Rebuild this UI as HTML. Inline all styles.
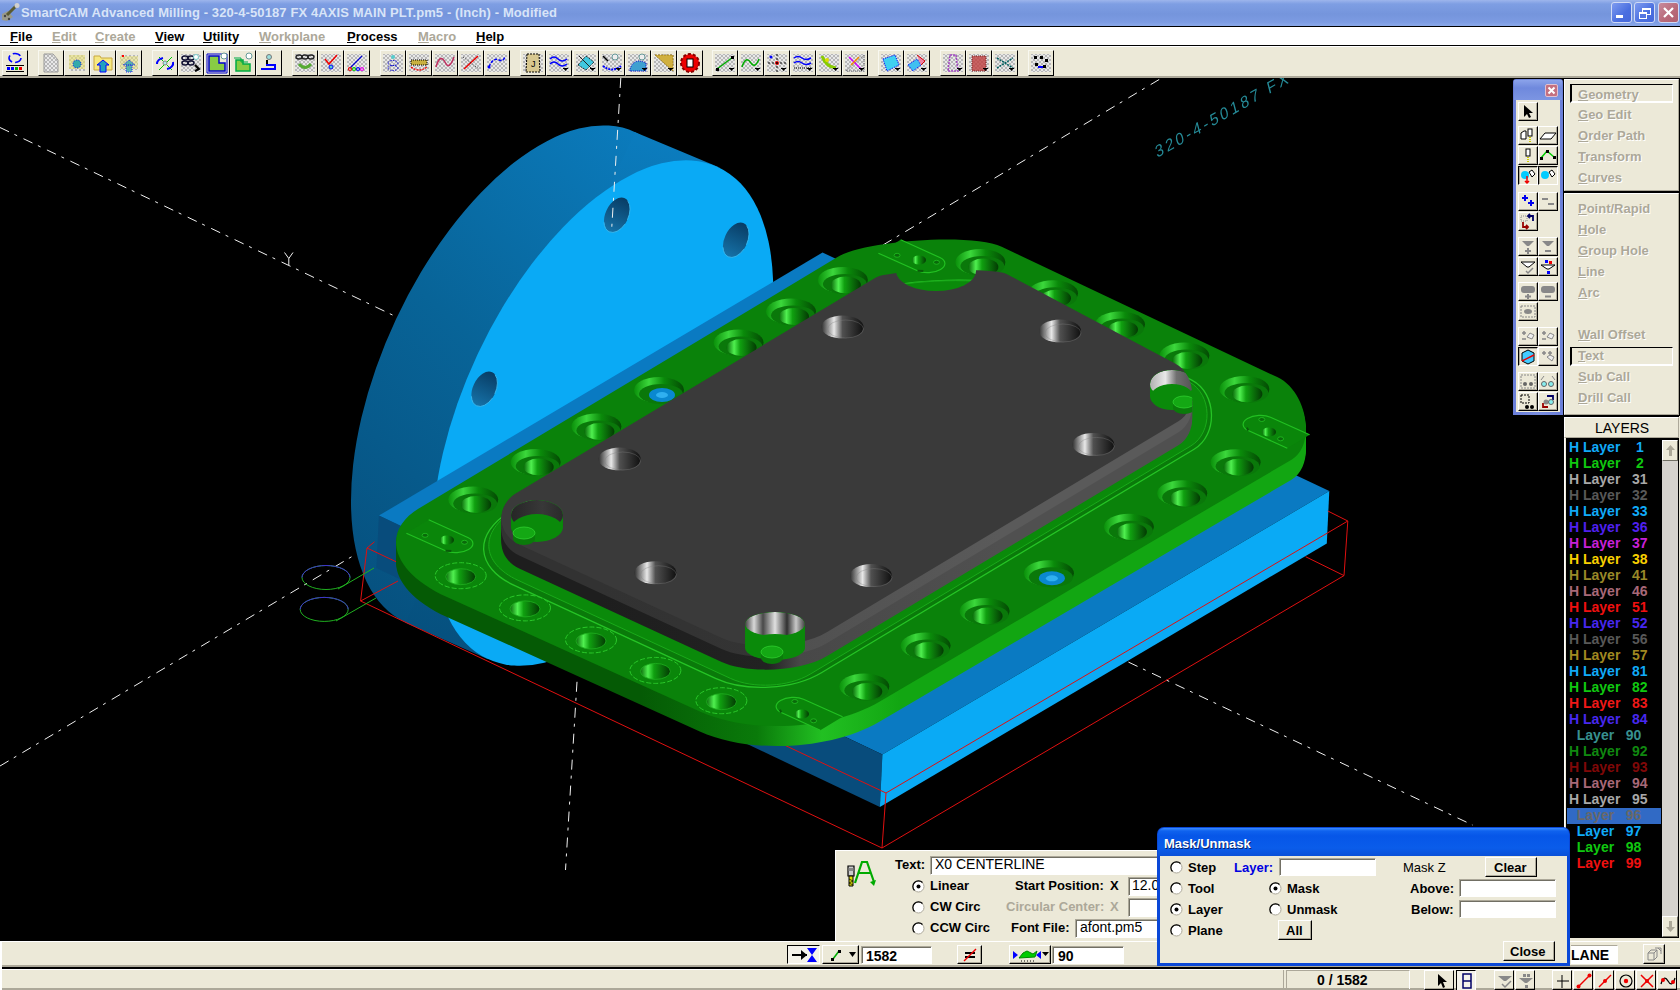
<!DOCTYPE html><html><head><meta charset="utf-8"><style>
*{margin:0;padding:0;box-sizing:border-box}
html,body{width:1680px;height:990px;overflow:hidden;background:#ECE9D8;font-family:"Liberation Sans", sans-serif;font-size:11px;color:#000}
.a{position:absolute}
.t{position:absolute;white-space:nowrap;line-height:1}
.btn{position:absolute;background:#ECE9D8;border-top:1px solid #fff;border-left:1px solid #fff;border-right:1px solid #000;border-bottom:1px solid #000;box-shadow:inset -1px -1px 0 #ACA899}
.sunk{position:absolute;background:#fff;border-top:1px solid #ACA899;border-left:1px solid #ACA899;border-right:1px solid #fff;border-bottom:1px solid #fff;box-shadow:inset 1px 1px 0 #716F64}
u{text-decoration:underline;text-decoration-thickness:1px;text-underline-offset:1px}
</style></head><body>

<div class="a" style="left:0;top:0;width:1680px;height:26px;background:linear-gradient(#9DB5EC 0px,#7E9EE3 4px,#7595DC 14px,#7C9BE2 22px,#87A6E8 25px)"></div>
<div class="a" style="left:0;top:26px;width:1680px;height:1px;background:#000"></div>
<svg class="a" style="left:1px;top:3px" width="19" height="18" viewBox="0 0 19 18">
<polygon points="1,11 7,8 12,14 6,18 1,17" fill="#9a9a8a"/>
<line x1="6" y1="12" x2="15" y2="3" stroke="#5a5a30" stroke-width="3"/>
<circle cx="16" cy="2.5" r="2.5" fill="#d0d0d0"/><circle cx="4" cy="13" r="1.2" fill="#444"/><circle cx="8" cy="16" r="1.2" fill="#444"/></svg>
<div class="t" style="left:21px;top:6px;font-size:13px;font-weight:bold;color:#D8E4F8;letter-spacing:0.1px">SmartCAM Advanced Milling - 320-4-50187 FX 4AXIS MAIN PLT.pm5 - (Inch) - Modified</div>
<div class="a" style="left:1611px;top:2px;width:21px;height:21px;border:1px solid #D0DAF5;border-radius:3px;background:linear-gradient(135deg,#7E9BF0,#4A6FE0 60%,#4668DA)"><div class="a" style="left:4px;top:12px;width:7px;height:3px;background:#fff"></div></div>
<div class="a" style="left:1634px;top:2px;width:21px;height:21px;border:1px solid #D0DAF5;border-radius:3px;background:linear-gradient(135deg,#7E9BF0,#4A6FE0 60%,#4668DA)"><div class="a" style="left:7px;top:5px;width:9px;height:7px;border:1px solid #fff;border-top-width:2px"></div><div class="a" style="left:4px;top:9px;width:8px;height:7px;border:1px solid #fff;border-top-width:2px;background:#5577E2"></div></div>
<div class="a" style="left:1658px;top:2px;width:21px;height:21px;border:1px solid #D0DAF5;border-radius:3px;background:linear-gradient(135deg,#C88B9C,#B86878 60%,#B06070)"><svg class="a" style="left:3px;top:3px" width="13" height="13"><path d="M2,2 L11,11 M11,2 L2,11" stroke="#fff" stroke-width="2.2"/></svg></div>
<div class="a" style="left:0;top:27px;width:1680px;height:18px;background:#fff"></div>
<div class="a" style="left:0;top:45px;width:1680px;height:1px;background:#000"></div>
<div class="t" style="left:10px;top:30px;font-size:13px;font-weight:bold;color:#000"><u>F</u>ile</div>
<div class="t" style="left:52px;top:30px;font-size:13px;font-weight:bold;color:#ACA899"><u>E</u>dit</div>
<div class="t" style="left:95px;top:30px;font-size:13px;font-weight:bold;color:#ACA899"><u>C</u>reate</div>
<div class="t" style="left:155px;top:30px;font-size:13px;font-weight:bold;color:#000"><u>V</u>iew</div>
<div class="t" style="left:203px;top:30px;font-size:13px;font-weight:bold;color:#000"><u>U</u>tility</div>
<div class="t" style="left:259px;top:30px;font-size:13px;font-weight:bold;color:#ACA899"><u>W</u>orkplane</div>
<div class="t" style="left:347px;top:30px;font-size:13px;font-weight:bold;color:#000"><u>P</u>rocess</div>
<div class="t" style="left:418px;top:30px;font-size:13px;font-weight:bold;color:#ACA899"><u>M</u>acro</div>
<div class="t" style="left:476px;top:30px;font-size:13px;font-weight:bold;color:#000"><u>H</u>elp</div>
<div class="a" style="left:0;top:46px;width:1680px;height:32px;background:#ECE9D8"></div>
<div class="a" style="left:0;top:46px;width:1680px;height:1px;background:#fff"></div>
<div class="a" style="left:0;top:76px;width:1680px;height:2px;background:#ACA899"></div>
<svg width="0" height="0" class="a"><defs><pattern id="ck" width="4" height="4" patternUnits="userSpaceOnUse"><rect width="4" height="4" fill="#E8E8E8"/><rect width="2" height="2" fill="#B8B8B8"/><rect x="2" y="2" width="2" height="2" fill="#B8B8B8"/></pattern></defs></svg>
<div class="a" style="left:2px;top:50px;width:26px;height:26px;background:#ECE9D8;border-right:1px solid #000;border-bottom:1px solid #000;border-top:1px solid #F8F8F0;border-left:1px solid #F8F8F0"></div>
<svg class="a" style="left:3px;top:51px" width="24" height="24" viewBox="0 0 24 24"><ellipse cx="12" cy="7" rx="6" ry="4.5" fill="none" stroke="#00f" stroke-width="1.6" stroke-dasharray="8 3"/><rect x="3" y="14" width="18" height="1" fill="#000"/><rect x="3" y="20" width="18" height="1" fill="#000"/><rect x="4" y="16" width="3" height="3" fill="#00f"/><rect x="8" y="16" width="3" height="3" fill="#00f"/><rect x="12" y="16" width="3" height="3" fill="#0a0"/><rect x="16" y="16" width="3" height="3" fill="#e00"/></svg>
<div class="a" style="left:38px;top:50px;width:26px;height:26px;background:#ECE9D8;border-right:1px solid #000;border-bottom:1px solid #000;border-top:1px solid #F8F8F0;border-left:1px solid #F8F8F0"></div>
<svg class="a" style="left:39px;top:51px" width="24" height="24" viewBox="0 0 24 24"><path d="M5,3 L14,3 L19,9 L19,21 L5,21 Z" fill="url(#ck)" stroke="#999"/></svg>
<div class="a" style="left:64px;top:50px;width:26px;height:26px;background:#ECE9D8;border-right:1px solid #000;border-bottom:1px solid #000;border-top:1px solid #F8F8F0;border-left:1px solid #F8F8F0"></div>
<svg class="a" style="left:65px;top:51px" width="24" height="24" viewBox="0 0 24 24"><path d="M4,4 L20,4 L20,20 L4,20 Z" fill="url(#ck)"/><path d="M4,4 L20,4 L20,18 L4,18Z" fill="#e8e070" opacity="0.6"/><circle cx="12" cy="13" r="4" fill="#3aa" stroke="#00f" stroke-dasharray="1 1.5"/></svg>
<div class="a" style="left:90px;top:50px;width:26px;height:26px;background:#ECE9D8;border-right:1px solid #000;border-bottom:1px solid #000;border-top:1px solid #F8F8F0;border-left:1px solid #F8F8F0"></div>
<svg class="a" style="left:91px;top:51px" width="24" height="24" viewBox="0 0 24 24"><path d="M3,5 L9,5 L10,7 L21,7 L21,19 L3,19 Z" fill="#F6E880" stroke="#c8a840"/><path d="M12,9 L18,14 L15,14 L15,21 L9,21 L9,14 L6,14 Z" fill="#20A0C0" stroke="#00f"/></svg>
<div class="a" style="left:116px;top:50px;width:26px;height:26px;background:#ECE9D8;border-right:1px solid #000;border-bottom:1px solid #000;border-top:1px solid #F8F8F0;border-left:1px solid #F8F8F0"></div>
<svg class="a" style="left:117px;top:51px" width="24" height="24" viewBox="0 0 24 24"><path d="M3,4 L21,4 L21,19 L3,19 Z" fill="url(#ck)"/><path d="M3,5 L21,5 L21,18 L3,18Z" fill="#e8e070" opacity="0.5"/><path d="M12,9 L18,14 L6,14 Z M9,14 L15,14 L15,21 L9,21Z" fill="#3aa" opacity="0.8" stroke="#00f" stroke-dasharray="1 1"/><rect x="5" y="4" width="2" height="2" fill="#f00"/></svg>
<div class="a" style="left:152px;top:50px;width:26px;height:26px;background:#ECE9D8;border-right:1px solid #000;border-bottom:1px solid #000;border-top:1px solid #F8F8F0;border-left:1px solid #F8F8F0"></div>
<svg class="a" style="left:153px;top:51px" width="24" height="24" viewBox="0 0 24 24"><path d="M6,6 L19,19 M19,6 L6,19" stroke="#0c0" stroke-width="1"/><path d="M4,13 A8,6 0 0 1 10,7" fill="none" stroke="#00f" stroke-width="2"/><path d="M20,11 A8,6 0 0 1 14,18" fill="none" stroke="#00f" stroke-width="2"/><circle cx="12" cy="12" r="2" fill="#aee" stroke="#888"/></svg>
<div class="a" style="left:178px;top:50px;width:26px;height:26px;background:#ECE9D8;border-right:1px solid #000;border-bottom:1px solid #000;border-top:1px solid #F8F8F0;border-left:1px solid #F8F8F0"></div>
<svg class="a" style="left:179px;top:51px" width="24" height="24" viewBox="0 0 24 24"><rect x="2" y="3" width="20" height="18" fill="url(#ck)"/><g fill="none" stroke="#113" stroke-width="1.5"><ellipse cx="6" cy="7" rx="3" ry="2"/><ellipse cx="12" cy="7" rx="3" ry="2"/><ellipse cx="6" cy="12" rx="3" ry="2"/><ellipse cx="12" cy="12" rx="3" ry="2"/></g><circle cx="17" cy="6" r="2.5" fill="#fff" stroke="#7cc"/><path d="M16,14 L20,18 L16,20" fill="none" stroke="#000" stroke-width="2"/></svg>
<div class="a" style="left:204px;top:50px;width:26px;height:26px;background:#ECE9D8;border-right:1px solid #000;border-bottom:1px solid #000;border-top:1px solid #F8F8F0;border-left:1px solid #F8F8F0"></div>
<svg class="a" style="left:205px;top:51px" width="24" height="24" viewBox="0 0 24 24"><path d="M4,5 L14,5 L14,12 L20,12 L20,20 L4,20 Z" fill="#8c4" stroke="#00c" stroke-width="1.5"/><path d="M2,3 L22,3 L22,22 L2,22Z" fill="none" stroke="#00c"/><circle cx="19" cy="5" r="3" fill="#fff" stroke="#699"/></svg>
<div class="a" style="left:230px;top:50px;width:26px;height:26px;background:#ECE9D8;border-right:1px solid #000;border-bottom:1px solid #000;border-top:1px solid #F8F8F0;border-left:1px solid #F8F8F0"></div>
<svg class="a" style="left:231px;top:51px" width="24" height="24" viewBox="0 0 24 24"><path d="M5,9 L12,9 L12,13 L19,13 L19,20 L5,20 Z" fill="#8c4" stroke="#0a4" stroke-width="1.5"/><path d="M3,7 L10,7 L10,11 L17,11" fill="none" stroke="#0a4"/><circle cx="18" cy="5" r="3" fill="#fff" stroke="#699"/></svg>
<div class="a" style="left:256px;top:50px;width:26px;height:26px;background:#ECE9D8;border-right:1px solid #000;border-bottom:1px solid #000;border-top:1px solid #F8F8F0;border-left:1px solid #F8F8F0"></div>
<svg class="a" style="left:257px;top:51px" width="24" height="24" viewBox="0 0 24 24"><circle cx="12" cy="6" r="2.5" fill="#9dd" stroke="#777"/><path d="M10,11 L10,14 L18,14 L18,18 L4,18" fill="none" stroke="#00f" stroke-width="2"/><rect x="9" y="9" width="2" height="4" fill="#000"/></svg>
<div class="a" style="left:292px;top:50px;width:26px;height:26px;background:#ECE9D8;border-right:1px solid #000;border-bottom:1px solid #000;border-top:1px solid #F8F8F0;border-left:1px solid #F8F8F0"></div>
<svg class="a" style="left:293px;top:51px" width="24" height="24" viewBox="0 0 24 24"><rect x="2" y="3" width="20" height="18" fill="url(#ck)"/><g fill="none" stroke="#222" stroke-width="1.3"><ellipse cx="6" cy="6" rx="3" ry="2"/><ellipse cx="12" cy="6" rx="3" ry="2"/><ellipse cx="18" cy="6" rx="3" ry="2"/></g><path d="M6,13 Q12,20 18,13" stroke="#5a3" stroke-width="3" fill="none"/></svg>
<div class="a" style="left:318px;top:50px;width:26px;height:26px;background:#ECE9D8;border-right:1px solid #000;border-bottom:1px solid #000;border-top:1px solid #F8F8F0;border-left:1px solid #F8F8F0"></div>
<svg class="a" style="left:319px;top:51px" width="24" height="24" viewBox="0 0 24 24"><rect x="2" y="3" width="20" height="18" fill="url(#ck)"/><path d="M6,8 L10,13 L18,4" fill="none" stroke="#e00" stroke-width="1.5"/><circle cx="12" cy="16" r="2" fill="#5cc" stroke="#00f"/></svg>
<div class="a" style="left:344px;top:50px;width:26px;height:26px;background:#ECE9D8;border-right:1px solid #000;border-bottom:1px solid #000;border-top:1px solid #F8F8F0;border-left:1px solid #F8F8F0"></div>
<svg class="a" style="left:345px;top:51px" width="24" height="24" viewBox="0 0 24 24"><rect x="2" y="3" width="20" height="18" fill="url(#ck)"/><path d="M5,17 L17,5" stroke="#00c" stroke-width="1.3"/><g fill="none" stroke-width="1.2"><circle cx="5" cy="18" r="1.5" stroke="#e00"/><circle cx="9" cy="18" r="1.5" stroke="#0c0"/><circle cx="13" cy="18" r="1.5" stroke="#00f"/><circle cx="17" cy="18" r="1.5" stroke="#e0e"/></g></svg>
<div class="a" style="left:380px;top:50px;width:26px;height:26px;background:#ECE9D8;border-right:1px solid #000;border-bottom:1px solid #000;border-top:1px solid #F8F8F0;border-left:1px solid #F8F8F0"></div>
<svg class="a" style="left:381px;top:51px" width="24" height="24" viewBox="0 0 24 24"><rect x="2" y="3" width="20" height="18" fill="url(#ck)"/><circle cx="12" cy="6" r="2" fill="#5cc"/><g fill="none" stroke="#00c" stroke-dasharray="1.5 1"><ellipse cx="12" cy="12" rx="5" ry="2.5"/><ellipse cx="12" cy="17" rx="5" ry="2.5"/></g></svg>
<div class="a" style="left:406px;top:50px;width:26px;height:26px;background:#ECE9D8;border-right:1px solid #000;border-bottom:1px solid #000;border-top:1px solid #F8F8F0;border-left:1px solid #F8F8F0"></div>
<svg class="a" style="left:407px;top:51px" width="24" height="24" viewBox="0 0 24 24"><rect x="2" y="3" width="20" height="18" fill="url(#ck)"/><rect x="4" y="9" width="16" height="5" fill="#c8b040" stroke="#000" stroke-dasharray="1 1"/><path d="M4,16 Q12,22 20,16" stroke="#e00" stroke-width="1.3" fill="none" stroke-dasharray="2 1"/></svg>
<div class="a" style="left:432px;top:50px;width:26px;height:26px;background:#ECE9D8;border-right:1px solid #000;border-bottom:1px solid #000;border-top:1px solid #F8F8F0;border-left:1px solid #F8F8F0"></div>
<svg class="a" style="left:433px;top:51px" width="24" height="24" viewBox="0 0 24 24"><rect x="2" y="3" width="20" height="18" fill="url(#ck)"/><path d="M3,16 Q7,2 12,11 Q16,20 21,6" stroke="#c03060" stroke-width="1.5" fill="none"/></svg>
<div class="a" style="left:458px;top:50px;width:26px;height:26px;background:#ECE9D8;border-right:1px solid #000;border-bottom:1px solid #000;border-top:1px solid #F8F8F0;border-left:1px solid #F8F8F0"></div>
<svg class="a" style="left:459px;top:51px" width="24" height="24" viewBox="0 0 24 24"><rect x="2" y="3" width="20" height="18" fill="url(#ck)"/><path d="M5,18 L19,5" stroke="#e00" stroke-width="1.5"/><path d="M4,6 L20,18" stroke="#222" stroke-dasharray="1 2"/></svg>
<div class="a" style="left:484px;top:50px;width:26px;height:26px;background:#ECE9D8;border-right:1px solid #000;border-bottom:1px solid #000;border-top:1px solid #F8F8F0;border-left:1px solid #F8F8F0"></div>
<svg class="a" style="left:485px;top:51px" width="24" height="24" viewBox="0 0 24 24"><rect x="2" y="3" width="20" height="18" fill="url(#ck)"/><path d="M4,16 Q8,6 14,9 Q18,11 20,6" stroke="#00f" stroke-width="1.5" fill="none" stroke-dasharray="3 1.5"/><circle cx="4" cy="16" r="1.5" fill="#00f"/></svg>
<div class="a" style="left:520px;top:50px;width:26px;height:26px;background:#ECE9D8;border-right:1px solid #000;border-bottom:1px solid #000;border-top:1px solid #F8F8F0;border-left:1px solid #F8F8F0"></div>
<svg class="a" style="left:521px;top:51px" width="24" height="24" viewBox="0 0 24 24"><rect x="2" y="3" width="20" height="18" fill="url(#ck)"/><path d="M6,3 L18,3 L19,21 L5,21 Z" fill="#d8c890" stroke="#000" stroke-dasharray="2 1"/><text x="10" y="16" font-size="9" fill="#000">J</text></svg>
<div class="a" style="left:546px;top:50px;width:26px;height:26px;background:#ECE9D8;border-right:1px solid #000;border-bottom:1px solid #000;border-top:1px solid #F8F8F0;border-left:1px solid #F8F8F0"></div>
<svg class="a" style="left:547px;top:51px" width="24" height="24" viewBox="0 0 24 24"><rect x="2" y="3" width="20" height="18" fill="url(#ck)"/><path d="M3,8 Q7,4 11,8 Q15,12 20,8 M3,13 Q7,9 11,13 Q15,17 20,13" stroke="#00f" stroke-width="1.5" fill="none"/></svg>
<svg class="a" style="left:563px;top:68px" width="6" height="5"><path d="M0,0 L5,0 L2.5,3Z" fill="#000"/><rect x="0" y="0" width="5" height="1" fill="#000"/></svg>
<div class="a" style="left:573px;top:50px;width:26px;height:26px;background:#ECE9D8;border-right:1px solid #000;border-bottom:1px solid #000;border-top:1px solid #F8F8F0;border-left:1px solid #F8F8F0"></div>
<svg class="a" style="left:574px;top:51px" width="24" height="24" viewBox="0 0 24 24"><rect x="2" y="3" width="20" height="18" fill="url(#ck)"/><path d="M4,14 L12,5 L20,11 L12,19 Z" fill="#40c8e0" stroke="#000" stroke-dasharray="1 1"/><path d="M5,5 L19,19" stroke="#222"/></svg>
<svg class="a" style="left:590px;top:68px" width="6" height="5"><path d="M0,0 L5,0 L2.5,3Z" fill="#000"/><rect x="0" y="0" width="5" height="1" fill="#000"/></svg>
<div class="a" style="left:599px;top:50px;width:26px;height:26px;background:#ECE9D8;border-right:1px solid #000;border-bottom:1px solid #000;border-top:1px solid #F8F8F0;border-left:1px solid #F8F8F0"></div>
<svg class="a" style="left:600px;top:51px" width="24" height="24" viewBox="0 0 24 24"><rect x="2" y="3" width="20" height="18" fill="url(#ck)"/><path d="M3,15 Q12,22 21,15" stroke="#00f" stroke-width="2" fill="none" stroke-dasharray="2 1"/><circle cx="15" cy="6" r="3" fill="#eee" stroke="#699"/><path d="M3,5 L8,10" stroke="#000" stroke-width="1.5"/></svg>
<svg class="a" style="left:616px;top:68px" width="6" height="5"><path d="M0,0 L5,0 L2.5,3Z" fill="#000"/><rect x="0" y="0" width="5" height="1" fill="#000"/></svg>
<div class="a" style="left:625px;top:50px;width:26px;height:26px;background:#ECE9D8;border-right:1px solid #000;border-bottom:1px solid #000;border-top:1px solid #F8F8F0;border-left:1px solid #F8F8F0"></div>
<svg class="a" style="left:626px;top:51px" width="24" height="24" viewBox="0 0 24 24"><rect x="2" y="3" width="20" height="18" fill="url(#ck)"/><path d="M4,18 Q8,6 20,12 L20,20 L4,20Z" fill="#40a0d0" stroke="#00c" stroke-dasharray="1 1"/><circle cx="16" cy="6" r="3" fill="#eee" stroke="#699"/></svg>
<svg class="a" style="left:642px;top:68px" width="6" height="5"><path d="M0,0 L5,0 L2.5,3Z" fill="#000"/><rect x="0" y="0" width="5" height="1" fill="#000"/></svg>
<div class="a" style="left:651px;top:50px;width:26px;height:26px;background:#ECE9D8;border-right:1px solid #000;border-bottom:1px solid #000;border-top:1px solid #F8F8F0;border-left:1px solid #F8F8F0"></div>
<svg class="a" style="left:652px;top:51px" width="24" height="24" viewBox="0 0 24 24"><rect x="2" y="3" width="20" height="18" fill="url(#ck)"/><path d="M3,4 L21,4 L21,20 Z" fill="#d0b040" stroke="#a08020" stroke-dasharray="2 1"/></svg>
<svg class="a" style="left:668px;top:68px" width="6" height="5"><path d="M0,0 L5,0 L2.5,3Z" fill="#000"/><rect x="0" y="0" width="5" height="1" fill="#000"/></svg>
<div class="a" style="left:677px;top:50px;width:26px;height:26px;background:#ECE9D8;border-right:1px solid #000;border-bottom:1px solid #000;border-top:1px solid #F8F8F0;border-left:1px solid #F8F8F0"></div>
<svg class="a" style="left:678px;top:51px" width="24" height="24" viewBox="0 0 24 24"><circle cx="12" cy="12" r="9" fill="#e00" stroke="#800" stroke-dasharray="3 2" stroke-width="2"/><circle cx="12" cy="12" r="6" fill="#e00"/><rect x="9" y="8" width="6" height="8" fill="#fff" stroke="#000"/></svg>
<div class="a" style="left:712px;top:50px;width:26px;height:26px;background:#ECE9D8;border-right:1px solid #000;border-bottom:1px solid #000;border-top:1px solid #F8F8F0;border-left:1px solid #F8F8F0"></div>
<svg class="a" style="left:713px;top:51px" width="24" height="24" viewBox="0 0 24 24"><rect x="2" y="3" width="20" height="18" fill="url(#ck)"/><path d="M4,18 L20,6" stroke="#0a0" stroke-width="1.5"/><rect x="3" y="17" width="3" height="3" fill="#000"/><rect x="18" y="5" width="3" height="3" fill="#000"/></svg>
<svg class="a" style="left:729px;top:68px" width="6" height="5"><path d="M0,0 L5,0 L2.5,3Z" fill="#000"/><rect x="0" y="0" width="5" height="1" fill="#000"/></svg>
<div class="a" style="left:738px;top:50px;width:26px;height:26px;background:#ECE9D8;border-right:1px solid #000;border-bottom:1px solid #000;border-top:1px solid #F8F8F0;border-left:1px solid #F8F8F0"></div>
<svg class="a" style="left:739px;top:51px" width="24" height="24" viewBox="0 0 24 24"><rect x="2" y="3" width="20" height="18" fill="url(#ck)"/><path d="M3,16 Q7,4 12,12 Q16,18 20,8" stroke="#0a0" stroke-width="1.5" fill="none"/></svg>
<svg class="a" style="left:755px;top:68px" width="6" height="5"><path d="M0,0 L5,0 L2.5,3Z" fill="#000"/><rect x="0" y="0" width="5" height="1" fill="#000"/></svg>
<div class="a" style="left:764px;top:50px;width:26px;height:26px;background:#ECE9D8;border-right:1px solid #000;border-bottom:1px solid #000;border-top:1px solid #F8F8F0;border-left:1px solid #F8F8F0"></div>
<svg class="a" style="left:765px;top:51px" width="24" height="24" viewBox="0 0 24 24"><rect x="2" y="3" width="20" height="18" fill="url(#ck)"/><circle cx="12" cy="12" r="2" fill="#e00"/><path d="M12,3 L12,21 M3,12 L21,12" stroke="#000" stroke-dasharray="2 2"/><circle cx="6" cy="6" r="1.5" fill="#00f"/></svg>
<svg class="a" style="left:781px;top:68px" width="6" height="5"><path d="M0,0 L5,0 L2.5,3Z" fill="#000"/><rect x="0" y="0" width="5" height="1" fill="#000"/></svg>
<div class="a" style="left:790px;top:50px;width:26px;height:26px;background:#ECE9D8;border-right:1px solid #000;border-bottom:1px solid #000;border-top:1px solid #F8F8F0;border-left:1px solid #F8F8F0"></div>
<svg class="a" style="left:791px;top:51px" width="24" height="24" viewBox="0 0 24 24"><rect x="2" y="3" width="20" height="18" fill="url(#ck)"/><path d="M3,7 Q7,4 11,7 Q15,10 20,7 M3,12 Q7,9 11,12 Q15,15 20,12" stroke="#00f" stroke-width="1.5" fill="none"/><path d="M3,17 L20,17" stroke="#000" stroke-dasharray="1 1"/></svg>
<svg class="a" style="left:807px;top:68px" width="6" height="5"><path d="M0,0 L5,0 L2.5,3Z" fill="#000"/><rect x="0" y="0" width="5" height="1" fill="#000"/></svg>
<div class="a" style="left:816px;top:50px;width:26px;height:26px;background:#ECE9D8;border-right:1px solid #000;border-bottom:1px solid #000;border-top:1px solid #F8F8F0;border-left:1px solid #F8F8F0"></div>
<svg class="a" style="left:817px;top:51px" width="24" height="24" viewBox="0 0 24 24"><rect x="2" y="3" width="20" height="18" fill="url(#ck)"/><path d="M5,5 Q9,16 19,17" stroke="#8c0" stroke-width="3" fill="none"/><circle cx="10" cy="9" r="2" fill="#dd0"/></svg>
<svg class="a" style="left:833px;top:68px" width="6" height="5"><path d="M0,0 L5,0 L2.5,3Z" fill="#000"/><rect x="0" y="0" width="5" height="1" fill="#000"/></svg>
<div class="a" style="left:842px;top:50px;width:26px;height:26px;background:#ECE9D8;border-right:1px solid #000;border-bottom:1px solid #000;border-top:1px solid #F8F8F0;border-left:1px solid #F8F8F0"></div>
<svg class="a" style="left:843px;top:51px" width="24" height="24" viewBox="0 0 24 24"><rect x="2" y="3" width="20" height="18" fill="url(#ck)"/><path d="M3,20 L21,4 L21,20Z" fill="none" stroke="#666" stroke-dasharray="1 1"/><path d="M6,6 L18,18" stroke="#c0f" stroke-width="1.5"/><path d="M16,6 L8,14" stroke="#e80" stroke-width="1.5"/></svg>
<svg class="a" style="left:859px;top:68px" width="6" height="5"><path d="M0,0 L5,0 L2.5,3Z" fill="#000"/><rect x="0" y="0" width="5" height="1" fill="#000"/></svg>
<div class="a" style="left:878px;top:50px;width:26px;height:26px;background:#ECE9D8;border-right:1px solid #000;border-bottom:1px solid #000;border-top:1px solid #F8F8F0;border-left:1px solid #F8F8F0"></div>
<svg class="a" style="left:879px;top:51px" width="24" height="24" viewBox="0 0 24 24"><rect x="2" y="3" width="20" height="18" fill="url(#ck)"/><path d="M4,8 L16,4 L20,14 L8,20 Z" fill="#40d0f0" stroke="#00f" stroke-dasharray="1 1"/></svg>
<svg class="a" style="left:895px;top:68px" width="6" height="5"><path d="M0,0 L5,0 L2.5,3Z" fill="#000"/><rect x="0" y="0" width="5" height="1" fill="#000"/></svg>
<div class="a" style="left:904px;top:50px;width:26px;height:26px;background:#ECE9D8;border-right:1px solid #000;border-bottom:1px solid #000;border-top:1px solid #F8F8F0;border-left:1px solid #F8F8F0"></div>
<svg class="a" style="left:905px;top:51px" width="24" height="24" viewBox="0 0 24 24"><rect x="2" y="3" width="20" height="18" fill="url(#ck)"/><path d="M3,14 L12,8 L16,14 L8,20Z" fill="#40c0f0" stroke="#00f" stroke-dasharray="1 1"/><path d="M12,4 L20,10 L16,14" fill="#f080a0" stroke="#c00"/></svg>
<svg class="a" style="left:921px;top:68px" width="6" height="5"><path d="M0,0 L5,0 L2.5,3Z" fill="#000"/><rect x="0" y="0" width="5" height="1" fill="#000"/></svg>
<div class="a" style="left:940px;top:50px;width:26px;height:26px;background:#ECE9D8;border-right:1px solid #000;border-bottom:1px solid #000;border-top:1px solid #F8F8F0;border-left:1px solid #F8F8F0"></div>
<svg class="a" style="left:941px;top:51px" width="24" height="24" viewBox="0 0 24 24"><rect x="2" y="3" width="20" height="18" fill="url(#ck)"/><path d="M9,4 L15,4 L17,20 L7,20 Z" fill="none" stroke="#a040c0" stroke-width="1.5" stroke-dasharray="2 1"/></svg>
<svg class="a" style="left:957px;top:68px" width="6" height="5"><path d="M0,0 L5,0 L2.5,3Z" fill="#000"/><rect x="0" y="0" width="5" height="1" fill="#000"/></svg>
<div class="a" style="left:966px;top:50px;width:26px;height:26px;background:#ECE9D8;border-right:1px solid #000;border-bottom:1px solid #000;border-top:1px solid #F8F8F0;border-left:1px solid #F8F8F0"></div>
<svg class="a" style="left:967px;top:51px" width="24" height="24" viewBox="0 0 24 24"><rect x="2" y="3" width="20" height="18" fill="url(#ck)"/><path d="M5,5 L19,5 L19,20 L5,20 Z" fill="#c04040" opacity="0.8" stroke="#600" stroke-dasharray="1 1"/></svg>
<svg class="a" style="left:983px;top:68px" width="6" height="5"><path d="M0,0 L5,0 L2.5,3Z" fill="#000"/><rect x="0" y="0" width="5" height="1" fill="#000"/></svg>
<div class="a" style="left:992px;top:50px;width:26px;height:26px;background:#ECE9D8;border-right:1px solid #000;border-bottom:1px solid #000;border-top:1px solid #F8F8F0;border-left:1px solid #F8F8F0"></div>
<svg class="a" style="left:993px;top:51px" width="24" height="24" viewBox="0 0 24 24"><rect x="2" y="3" width="20" height="18" fill="url(#ck)"/><path d="M4,7 L20,17 M4,17 L20,7" stroke="#006060" stroke-width="1.5" stroke-dasharray="2 1"/></svg>
<svg class="a" style="left:1009px;top:68px" width="6" height="5"><path d="M0,0 L5,0 L2.5,3Z" fill="#000"/><rect x="0" y="0" width="5" height="1" fill="#000"/></svg>
<div class="a" style="left:1028px;top:50px;width:26px;height:26px;background:#ECE9D8;border-right:1px solid #000;border-bottom:1px solid #000;border-top:1px solid #F8F8F0;border-left:1px solid #F8F8F0"></div>
<svg class="a" style="left:1029px;top:51px" width="24" height="24" viewBox="0 0 24 24"><rect x="2" y="3" width="20" height="18" fill="url(#ck)"/><rect x="3" y="4" width="18" height="16" fill="url(#ck)"/><g fill="#000"><rect x="5" y="5" width="3" height="3"/><rect x="11" y="5" width="3" height="3"/><rect x="16" y="8" width="3" height="3"/><rect x="6" y="12" width="3" height="3"/><rect x="14" y="14" width="3" height="3"/></g><rect x="9" y="15" width="5" height="2" fill="#00f"/></svg>
<div class="a" style="left:0;top:78px;width:1563px;height:863px;background:#000"></div>
<svg class="a" style="left:0;top:78px" width="1563" height="863" viewBox="0 78 1563 863">
<defs>
<linearGradient id="discside" gradientUnits="userSpaceOnUse" x1="600" y1="120" x2="420" y2="640"><stop offset="0" stop-color="#0B7CBE"/><stop offset="0.5" stop-color="#086498"/><stop offset="1" stop-color="#06507E"/></linearGradient>
<linearGradient id="plateside" gradientUnits="userSpaceOnUse" x1="640" y1="0" x2="900" y2="0"><stop offset="0" stop-color="#055A05"/><stop offset="0.45" stop-color="#0A7A0A"/><stop offset="0.7" stop-color="#22C022"/><stop offset="1" stop-color="#12A612"/></linearGradient>
<linearGradient id="grayside" gradientUnits="userSpaceOnUse" x1="600" y1="0" x2="1000" y2="0"><stop offset="0" stop-color="#323232"/><stop offset="0.42" stop-color="#343434"/><stop offset="0.5" stop-color="#505050"/><stop offset="1" stop-color="#5A5A5A"/></linearGradient><linearGradient id="grayside2" gradientUnits="userSpaceOnUse" x1="600" y1="0" x2="1000" y2="0"><stop offset="0" stop-color="#1E1E1E"/><stop offset="0.42" stop-color="#222222"/><stop offset="0.5" stop-color="#484848"/><stop offset="1" stop-color="#505050"/></linearGradient>
<linearGradient id="holeG" x1="0" y1="0" x2="1" y2="0"><stop offset="0" stop-color="#0A6A0A"/><stop offset="0.25" stop-color="#50F050"/><stop offset="0.45" stop-color="#10A010"/><stop offset="1" stop-color="#033A03"/></linearGradient>
<linearGradient id="cbG" x1="0" y1="0" x2="1" y2="0"><stop offset="0" stop-color="#0A900A"/><stop offset="0.3" stop-color="#3CD83C"/><stop offset="0.6" stop-color="#0A8A0A"/><stop offset="1" stop-color="#044A04"/></linearGradient>
<linearGradient id="grayHole" x1="0" y1="0" x2="1" y2="0"><stop offset="0" stop-color="#303030"/><stop offset="0.3" stop-color="#E8E8E8"/><stop offset="0.5" stop-color="#505050"/><stop offset="1" stop-color="#101010"/></linearGradient>
<linearGradient id="blueHole" x1="0" y1="0" x2="1" y2="0"><stop offset="0" stop-color="#0A5A90"/><stop offset="0.6" stop-color="#0A80C0"/><stop offset="1" stop-color="#0A4A80"/></linearGradient>
<linearGradient id="notchG" x1="0" y1="0" x2="1" y2="0"><stop offset="0" stop-color="#404040"/><stop offset="0.15" stop-color="#D8D8D8"/><stop offset="0.3" stop-color="#484848"/><stop offset="0.5" stop-color="#E0E0E0"/><stop offset="0.7" stop-color="#303030"/><stop offset="0.85" stop-color="#C8C8C8"/><stop offset="1" stop-color="#404040"/></linearGradient>
<linearGradient id="notchL" x1="0" y1="0" x2="1" y2="0"><stop offset="0" stop-color="#262626"/><stop offset="0.6" stop-color="#383838"/><stop offset="1" stop-color="#2A2A2A"/></linearGradient>
<linearGradient id="notchR" x1="0" y1="0" x2="1" y2="0"><stop offset="0" stop-color="#B0B0B0"/><stop offset="0.35" stop-color="#E8E8E8"/><stop offset="0.6" stop-color="#707070"/><stop offset="1" stop-color="#505050"/></linearGradient>
<linearGradient id="discHole" x1="0" y1="0" x2="0" y2="1"><stop offset="0" stop-color="#083C64"/><stop offset="1" stop-color="#1672A8"/></linearGradient>
</defs>
<path d="M0,127.5 L392.5,315" stroke="#F0F0F0" stroke-width="1" stroke-dasharray="10 6 3 7" fill="none"/>
<path d="M0,766 L373,544" stroke="#F0F0F0" stroke-width="1" stroke-dasharray="10 6 3 7" fill="none"/>
<path d="M1105,651 L1472.5,825" stroke="#F0F0F0" stroke-width="1" stroke-dasharray="10 6 3 7" fill="none"/>
<path d="M883,245 L1165,76" stroke="#F0F0F0" stroke-width="1" stroke-dasharray="10 6 3 7" fill="none"/>
<path d="M577,681.8 L565.5,870" stroke="#F0F0F0" stroke-width="1" stroke-dasharray="10 6 3 7" fill="none"/>
<path d="M284.5,252.5 L288.8,258.5 L293,252.5 M288.8,258.5 L288.8,265" stroke="#F0F0F0" stroke-width="1" fill="none"/>
<ellipse cx="520.2" cy="377.3" rx="137.1" ry="270.7" transform="rotate(25.14 520.2 377.3)" fill="url(#discside)"/>
<polygon points="405.2,622.4 487.5,658.9 718.3,167.1 635.2,132.2" fill="url(#discside)"/>
<ellipse cx="602.9" cy="413.0" rx="138.4" ry="271.6" transform="rotate(25.14 602.9 413.0)" fill="#0AAAF5"/>
<ellipse cx="617" cy="215" rx="11.5" ry="18.5" transform="rotate(25 617 215)" fill="url(#discHole)" stroke="#3ABAF0" stroke-width="0.8" stroke-dasharray="30 40" stroke-dashoffset="-5"/>
<ellipse cx="736" cy="240" rx="11.5" ry="18.5" transform="rotate(25 736 240)" fill="url(#discHole)" stroke="#3ABAF0" stroke-width="0.8" stroke-dasharray="30 40" stroke-dashoffset="-5"/>
<ellipse cx="484.4" cy="389" rx="11.5" ry="18.5" transform="rotate(25 484.4 389)" fill="url(#discHole)" stroke="#3ABAF0" stroke-width="0.8" stroke-dasharray="30 40" stroke-dashoffset="-5"/>
<path d="M620.8,78 L611.5,232" stroke="#F0F0F0" stroke-width="1" stroke-dasharray="10 6 3 7" fill="none"/>
<polygon points="378.9,515.6 822.5,252.5 1329.3,491.0 882.4,754.5" fill="#0A7AC2"/>
<polygon points="378.9,515.6 882.4,754.5 879.9,807.0 376.4,568.1" fill="#084C7C"/>
<polygon points="882.4,754.5 1329.3,491.0 1326.8,543.5 879.9,807.0" fill="#0AAAF5"/>
<path d="M882,848 L360.6,601 L367,548 L886,793 L882,848 L1344,575.6 L1347.8,521 L886,793" stroke="#E01010" stroke-width="1" fill="none"/>
<path d="M360.6,601 L398,581 M367,548 L374.5,541.8 M1347.8,521 L1327.8,511 M1344,575.6 L1305.6,556.7" stroke="#E01010" stroke-width="1" fill="none"/>
<path d="M446.9,596.9 C391.8,572.0 379.5,531.9 419.6,507.9 L837.1,257.3 C865.9,240.0 972.9,233.2 1001.7,246.8 L1277.2,377.1 C1307.3,391.3 1316.6,445.0 1291.5,459.7 L879.8,701.4 C831.4,729.8 750.4,734.3 699.8,711.4 Z" transform="translate(0 2)" fill="url(#plateside)"/>
<path d="M446.9,596.9 C391.8,572.0 379.5,531.9 419.6,507.9 L837.1,257.3 C865.9,240.0 972.9,233.2 1001.7,246.8 L1277.2,377.1 C1307.3,391.3 1316.6,445.0 1291.5,459.7 L879.8,701.4 C831.4,729.8 750.4,734.3 699.8,711.4 Z" transform="translate(0 4)" fill="url(#plateside)"/>
<path d="M446.9,596.9 C391.8,572.0 379.5,531.9 419.6,507.9 L837.1,257.3 C865.9,240.0 972.9,233.2 1001.7,246.8 L1277.2,377.1 C1307.3,391.3 1316.6,445.0 1291.5,459.7 L879.8,701.4 C831.4,729.8 750.4,734.3 699.8,711.4 Z" transform="translate(0 6)" fill="url(#plateside)"/>
<path d="M446.9,596.9 C391.8,572.0 379.5,531.9 419.6,507.9 L837.1,257.3 C865.9,240.0 972.9,233.2 1001.7,246.8 L1277.2,377.1 C1307.3,391.3 1316.6,445.0 1291.5,459.7 L879.8,701.4 C831.4,729.8 750.4,734.3 699.8,711.4 Z" transform="translate(0 8)" fill="url(#plateside)"/>
<path d="M446.9,596.9 C391.8,572.0 379.5,531.9 419.6,507.9 L837.1,257.3 C865.9,240.0 972.9,233.2 1001.7,246.8 L1277.2,377.1 C1307.3,391.3 1316.6,445.0 1291.5,459.7 L879.8,701.4 C831.4,729.8 750.4,734.3 699.8,711.4 Z" transform="translate(0 10)" fill="url(#plateside)"/>
<path d="M446.9,596.9 C391.8,572.0 379.5,531.9 419.6,507.9 L837.1,257.3 C865.9,240.0 972.9,233.2 1001.7,246.8 L1277.2,377.1 C1307.3,391.3 1316.6,445.0 1291.5,459.7 L879.8,701.4 C831.4,729.8 750.4,734.3 699.8,711.4 Z" transform="translate(0 12)" fill="url(#plateside)"/>
<path d="M446.9,596.9 C391.8,572.0 379.5,531.9 419.6,507.9 L837.1,257.3 C865.9,240.0 972.9,233.2 1001.7,246.8 L1277.2,377.1 C1307.3,391.3 1316.6,445.0 1291.5,459.7 L879.8,701.4 C831.4,729.8 750.4,734.3 699.8,711.4 Z" transform="translate(0 14)" fill="url(#plateside)"/>
<path d="M446.9,596.9 C391.8,572.0 379.5,531.9 419.6,507.9 L837.1,257.3 C865.9,240.0 972.9,233.2 1001.7,246.8 L1277.2,377.1 C1307.3,391.3 1316.6,445.0 1291.5,459.7 L879.8,701.4 C831.4,729.8 750.4,734.3 699.8,711.4 Z" transform="translate(0 16)" fill="url(#plateside)"/>
<path d="M446.9,596.9 C391.8,572.0 379.5,531.9 419.6,507.9 L837.1,257.3 C865.9,240.0 972.9,233.2 1001.7,246.8 L1277.2,377.1 C1307.3,391.3 1316.6,445.0 1291.5,459.7 L879.8,701.4 C831.4,729.8 750.4,734.3 699.8,711.4 Z" transform="translate(0 18)" fill="url(#plateside)"/>
<path d="M446.9,596.9 C391.8,572.0 379.5,531.9 419.6,507.9 L837.1,257.3 C865.9,240.0 972.9,233.2 1001.7,246.8 L1277.2,377.1 C1307.3,391.3 1316.6,445.0 1291.5,459.7 L879.8,701.4 C831.4,729.8 750.4,734.3 699.8,711.4 Z" transform="translate(0 20)" fill="url(#plateside)"/>
<path d="M446.9,596.9 C391.8,572.0 379.5,531.9 419.6,507.9 L837.1,257.3 C865.9,240.0 972.9,233.2 1001.7,246.8 L1277.2,377.1 C1307.3,391.3 1316.6,445.0 1291.5,459.7 L879.8,701.4 C831.4,729.8 750.4,734.3 699.8,711.4 Z" fill="#0A820A"/>
<path d="M514.8,585.7 C474.9,567.3 473.1,533.7 510.8,511.0 L877.4,291.1 C898.0,278.7 995.5,276.1 1016.7,287.4 L1192.2,380.4 C1217.0,393.5 1218.1,434.8 1194.1,449.2 L821.4,672.7 C793.1,689.7 745.4,692.3 715.5,678.4 Z" fill="#0A7A0A" stroke="#26C426" stroke-width="1.3"/>
<path d="M518.0,580.3 C480.6,563.0 478.9,531.5 514.2,510.2 L880.1,290.8 C899.4,279.2 990.8,276.8 1010.6,287.3 L1189.2,382.0 C1212.2,394.2 1213.2,432.5 1190.9,445.9 L810.1,674.2 C788.9,687.0 753.2,688.9 730.7,678.5 Z" fill="#0A8A0A" stroke="#1AAA1A" stroke-width="1"/>
<ellipse cx="473.2" cy="499.6" rx="25" ry="13" fill="url(#cbG)"/>
<ellipse cx="475.2" cy="503.6" rx="22" ry="10" fill="#0A780A"/>
<ellipse cx="476.2" cy="504.6" rx="15" ry="8.5" fill="url(#holeG)"/>
<ellipse cx="535.7" cy="462" rx="25" ry="13" fill="url(#cbG)"/>
<ellipse cx="537.7" cy="466" rx="22" ry="10" fill="#0A780A"/>
<ellipse cx="538.7" cy="467" rx="15" ry="8.5" fill="url(#holeG)"/>
<ellipse cx="596.4" cy="426.4" rx="25" ry="13" fill="url(#cbG)"/>
<ellipse cx="598.4" cy="430.4" rx="22" ry="10" fill="#0A780A"/>
<ellipse cx="599.4" cy="431.4" rx="15" ry="8.5" fill="url(#holeG)"/>
<ellipse cx="659" cy="390" rx="25" ry="13" fill="url(#cbG)"/>
<ellipse cx="661" cy="394" rx="22" ry="10" fill="#0A780A"/>
<ellipse cx="662" cy="395" rx="13" ry="7" fill="#0A88D0"/><ellipse cx="662" cy="395" rx="6" ry="3" fill="#30B0F0"/>
<ellipse cx="738.6" cy="342.5" rx="25" ry="13" fill="url(#cbG)"/>
<ellipse cx="740.6" cy="346.5" rx="22" ry="10" fill="#0A780A"/>
<ellipse cx="741.6" cy="347.5" rx="15" ry="8.5" fill="url(#holeG)"/>
<ellipse cx="791" cy="311.4" rx="25" ry="13" fill="url(#cbG)"/>
<ellipse cx="793" cy="315.4" rx="22" ry="10" fill="#0A780A"/>
<ellipse cx="794" cy="316.4" rx="15" ry="8.5" fill="url(#holeG)"/>
<ellipse cx="842.9" cy="280" rx="25" ry="13" fill="url(#cbG)"/>
<ellipse cx="844.9" cy="284" rx="22" ry="10" fill="#0A780A"/>
<ellipse cx="845.9" cy="285" rx="15" ry="8.5" fill="url(#holeG)"/>
<ellipse cx="980.4" cy="262" rx="25" ry="13" fill="url(#cbG)"/>
<ellipse cx="982.4" cy="266" rx="22" ry="10" fill="#0A780A"/>
<ellipse cx="983.4" cy="267" rx="15" ry="8.5" fill="url(#holeG)"/>
<ellipse cx="1053" cy="293.3" rx="25" ry="13" fill="url(#cbG)"/>
<ellipse cx="1055" cy="297.3" rx="22" ry="10" fill="#0A780A"/>
<ellipse cx="1056" cy="298.3" rx="15" ry="8.5" fill="url(#holeG)"/>
<ellipse cx="1120" cy="324.4" rx="25" ry="13" fill="url(#cbG)"/>
<ellipse cx="1122" cy="328.4" rx="22" ry="10" fill="#0A780A"/>
<ellipse cx="1123" cy="329.4" rx="15" ry="8.5" fill="url(#holeG)"/>
<ellipse cx="1184.4" cy="355.6" rx="25" ry="13" fill="url(#cbG)"/>
<ellipse cx="1186.4" cy="359.6" rx="22" ry="10" fill="#0A780A"/>
<ellipse cx="1187.4" cy="360.6" rx="15" ry="8.5" fill="url(#holeG)"/>
<ellipse cx="1244.4" cy="388.9" rx="25" ry="13" fill="url(#cbG)"/>
<ellipse cx="1246.4" cy="392.9" rx="22" ry="10" fill="#0A780A"/>
<ellipse cx="1247.4" cy="393.9" rx="15" ry="8.5" fill="url(#holeG)"/>
<ellipse cx="1235.6" cy="462.2" rx="25" ry="13" fill="url(#cbG)"/>
<ellipse cx="1237.6" cy="466.2" rx="22" ry="10" fill="#0A780A"/>
<ellipse cx="1238.6" cy="467.2" rx="15" ry="8.5" fill="url(#holeG)"/>
<ellipse cx="1182.2" cy="493.3" rx="25" ry="13" fill="url(#cbG)"/>
<ellipse cx="1184.2" cy="497.3" rx="22" ry="10" fill="#0A780A"/>
<ellipse cx="1185.2" cy="498.3" rx="15" ry="8.5" fill="url(#holeG)"/>
<ellipse cx="1128.9" cy="526.7" rx="25" ry="13" fill="url(#cbG)"/>
<ellipse cx="1130.9" cy="530.7" rx="22" ry="10" fill="#0A780A"/>
<ellipse cx="1131.9" cy="531.7" rx="15" ry="8.5" fill="url(#holeG)"/>
<ellipse cx="1048.9" cy="573.3" rx="25" ry="13" fill="url(#cbG)"/>
<ellipse cx="1050.9" cy="577.3" rx="22" ry="10" fill="#0A780A"/>
<ellipse cx="1051.9" cy="578.3" rx="13" ry="7" fill="#0A88D0"/><ellipse cx="1051.9" cy="578.3" rx="6" ry="3" fill="#30B0F0"/>
<ellipse cx="984.6" cy="611" rx="25" ry="13" fill="url(#cbG)"/>
<ellipse cx="986.6" cy="615" rx="22" ry="10" fill="#0A780A"/>
<ellipse cx="987.6" cy="616" rx="15" ry="8.5" fill="url(#holeG)"/>
<ellipse cx="925.6" cy="645.6" rx="25" ry="13" fill="url(#cbG)"/>
<ellipse cx="927.6" cy="649.6" rx="22" ry="10" fill="#0A780A"/>
<ellipse cx="928.6" cy="650.6" rx="15" ry="8.5" fill="url(#holeG)"/>
<ellipse cx="864.3" cy="686.4" rx="25" ry="13" fill="url(#cbG)"/>
<ellipse cx="866.3" cy="690.4" rx="22" ry="10" fill="#0A780A"/>
<ellipse cx="867.3" cy="691.4" rx="15" ry="8.5" fill="url(#holeG)"/>
<ellipse cx="460.7" cy="575.7" rx="25.5" ry="13" fill="#0A860A" stroke="#2AC82A" stroke-width="1" stroke-dasharray="5 2"/>
<ellipse cx="460.7" cy="576.7" rx="15" ry="8" fill="url(#holeG)" stroke="#20B020" stroke-width="0.8"/>
<ellipse cx="525" cy="607.9" rx="25.5" ry="13" fill="#0A860A" stroke="#2AC82A" stroke-width="1" stroke-dasharray="5 2"/>
<ellipse cx="525" cy="608.9" rx="15" ry="8" fill="url(#holeG)" stroke="#20B020" stroke-width="0.8"/>
<ellipse cx="591" cy="640" rx="25.5" ry="13" fill="#0A860A" stroke="#2AC82A" stroke-width="1" stroke-dasharray="5 2"/>
<ellipse cx="591" cy="641" rx="15" ry="8" fill="url(#holeG)" stroke="#20B020" stroke-width="0.8"/>
<ellipse cx="655.4" cy="670.4" rx="25.5" ry="13" fill="#0A860A" stroke="#2AC82A" stroke-width="1" stroke-dasharray="5 2"/>
<ellipse cx="655.4" cy="671.4" rx="15" ry="8" fill="url(#holeG)" stroke="#20B020" stroke-width="0.8"/>
<ellipse cx="721.4" cy="700.7" rx="25.5" ry="13" fill="#0A860A" stroke="#2AC82A" stroke-width="1" stroke-dasharray="5 2"/>
<ellipse cx="721.4" cy="701.7" rx="15" ry="8" fill="url(#holeG)" stroke="#20B020" stroke-width="0.8"/>
<path d="M406.4,533.2 L445.5,550.8 C452.0,553.8 462.4,553.2 468.5,549.5 C474.6,545.8 474.3,540.4 467.8,537.5 L428.7,519.8" fill="#0A860A" stroke="#22C022" stroke-width="1.2"/>
<path d="M451.3,551.1 L445.5,550.8" stroke="#0A5A0A" stroke-width="2"/>
<ellipse cx="447" cy="540" rx="7" ry="4.5" fill="url(#holeG)"/>
<ellipse cx="425.1" cy="535.3" rx="3" ry="2" fill="#0A6A0A" stroke="#22C022" stroke-width="0.8"/>
<ellipse cx="464.5" cy="542.3" rx="3" ry="2" fill="#0A6A0A" stroke="#22C022" stroke-width="0.8"/>
<path d="M820.3,730.2 L781.2,712.5 C774.7,709.6 774.4,704.2 780.5,700.5 C786.6,696.8 797.0,696.2 803.5,699.2 L842.6,716.8" fill="#0A860A" stroke="#22C022" stroke-width="1.2"/>
<path d="M779.9,709.6 L781.2,712.5" stroke="#0A5A0A" stroke-width="2"/>
<ellipse cx="802" cy="714" rx="7" ry="4.5" fill="url(#holeG)"/>
<ellipse cx="813.6" cy="720.8" rx="3" ry="2" fill="#0A6A0A" stroke="#22C022" stroke-width="0.8"/>
<ellipse cx="794.8" cy="701.5" rx="3" ry="2" fill="#0A6A0A" stroke="#22C022" stroke-width="0.8"/>
<path d="M1287.3,448.2 L1248.2,430.5 C1241.7,427.6 1241.4,422.2 1247.5,418.5 C1253.6,414.8 1264.0,414.2 1270.5,417.2 L1309.6,434.8" fill="#0A860A" stroke="#22C022" stroke-width="1.2"/>
<path d="M1246.9,427.6 L1248.2,430.5" stroke="#0A5A0A" stroke-width="2"/>
<ellipse cx="1269" cy="432" rx="7" ry="4.5" fill="url(#holeG)"/>
<ellipse cx="1280.6" cy="438.8" rx="3" ry="2" fill="#0A6A0A" stroke="#22C022" stroke-width="0.8"/>
<ellipse cx="1261.8" cy="419.5" rx="3" ry="2" fill="#0A6A0A" stroke="#22C022" stroke-width="0.8"/>
<path d="M878.4,253.2 L917.5,270.8 C924.0,273.8 934.4,273.2 940.5,269.5 C946.6,265.8 946.3,260.4 939.8,257.5 L900.7,239.8" fill="#0A860A" stroke="#22C022" stroke-width="1.2"/>
<path d="M923.3,271.1 L917.5,270.8" stroke="#0A5A0A" stroke-width="2"/>
<ellipse cx="919" cy="260" rx="7" ry="4.5" fill="url(#holeG)"/>
<ellipse cx="897.1" cy="255.3" rx="3" ry="2" fill="#0A6A0A" stroke="#22C022" stroke-width="0.8"/>
<ellipse cx="936.5" cy="262.3" rx="3" ry="2" fill="#0A6A0A" stroke="#22C022" stroke-width="0.8"/>
<mask id="grayMask" maskUnits="userSpaceOnUse" x="0" y="78" width="1563" height="863"><rect x="0" y="78" width="1563" height="863" fill="#fff"/><ellipse cx="537" cy="515" rx="26" ry="15" fill="#000"/><ellipse cx="537" cy="517" rx="26" ry="15" fill="#000"/><ellipse cx="537" cy="519" rx="26" ry="15" fill="#000"/><ellipse cx="537" cy="521" rx="26" ry="15" fill="#000"/><ellipse cx="537" cy="523" rx="26" ry="15" fill="#000"/><ellipse cx="537" cy="525" rx="26" ry="15" fill="#000"/><ellipse cx="537" cy="527" rx="26" ry="15" fill="#000"/><ellipse cx="775" cy="624" rx="30" ry="12" fill="#000"/><ellipse cx="775" cy="626" rx="30" ry="12" fill="#000"/><ellipse cx="775" cy="628" rx="30" ry="12" fill="#000"/><ellipse cx="775" cy="630" rx="30" ry="12" fill="#000"/><ellipse cx="775" cy="632" rx="30" ry="12" fill="#000"/><ellipse cx="775" cy="634" rx="30" ry="12" fill="#000"/><ellipse cx="775" cy="636" rx="30" ry="12" fill="#000"/><ellipse cx="775" cy="638" rx="30" ry="12" fill="#000"/><ellipse cx="775" cy="640" rx="30" ry="12" fill="#000"/><ellipse cx="775" cy="642" rx="30" ry="12" fill="#000"/><ellipse cx="775" cy="644" rx="30" ry="12" fill="#000"/><ellipse cx="775" cy="646" rx="30" ry="12" fill="#000"/><ellipse cx="775" cy="648" rx="30" ry="12" fill="#000"/><ellipse cx="1172" cy="384" rx="22" ry="14" fill="#000"/><ellipse cx="1172" cy="386" rx="22" ry="14" fill="#000"/><ellipse cx="1172" cy="388" rx="22" ry="14" fill="#000"/><ellipse cx="1172" cy="390" rx="22" ry="14" fill="#000"/><ellipse cx="1172" cy="392" rx="22" ry="14" fill="#000"/><ellipse cx="1172" cy="394" rx="22" ry="14" fill="#000"/><ellipse cx="1172" cy="396" rx="22" ry="14" fill="#000"/><ellipse cx="936" cy="271" rx="40" ry="20" fill="#000"/></mask>
<g mask="url(#grayMask)">
<path d="M519.2,544.5 C496.8,534.1 495.2,505.8 516.5,493.1 L875.9,277.5 C888.7,269.8 993.2,267.0 1006.5,274.0 L1175.1,363.4 C1196.3,374.6 1198.3,409.4 1178.4,421.3 L827.1,632.0 C801.3,647.5 748.4,650.3 721.1,637.7 Z" transform="translate(0 12)" fill="url(#grayside2)"/>
<path d="M519.2,544.5 C496.8,534.1 495.2,505.8 516.5,493.1 L875.9,277.5 C888.7,269.8 993.2,267.0 1006.5,274.0 L1175.1,363.4 C1196.3,374.6 1198.3,409.4 1178.4,421.3 L827.1,632.0 C801.3,647.5 748.4,650.3 721.1,637.7 Z" transform="translate(0 14)" fill="url(#grayside2)"/>
<path d="M519.2,544.5 C496.8,534.1 495.2,505.8 516.5,493.1 L875.9,277.5 C888.7,269.8 993.2,267.0 1006.5,274.0 L1175.1,363.4 C1196.3,374.6 1198.3,409.4 1178.4,421.3 L827.1,632.0 C801.3,647.5 748.4,650.3 721.1,637.7 Z" transform="translate(0 16)" fill="url(#grayside2)"/>
<path d="M519.2,544.5 C496.8,534.1 495.2,505.8 516.5,493.1 L875.9,277.5 C888.7,269.8 993.2,267.0 1006.5,274.0 L1175.1,363.4 C1196.3,374.6 1198.3,409.4 1178.4,421.3 L827.1,632.0 C801.3,647.5 748.4,650.3 721.1,637.7 Z" transform="translate(0 18)" fill="url(#grayside2)"/>
<path d="M519.2,544.5 C496.8,534.1 495.2,505.8 516.5,493.1 L875.9,277.5 C888.7,269.8 993.2,267.0 1006.5,274.0 L1175.1,363.4 C1196.3,374.6 1198.3,409.4 1178.4,421.3 L827.1,632.0 C801.3,647.5 748.4,650.3 721.1,637.7 Z" transform="translate(0 20)" fill="url(#grayside2)"/>
<path d="M519.2,544.5 C496.8,534.1 495.2,505.8 516.5,493.1 L875.9,277.5 C888.7,269.8 993.2,267.0 1006.5,274.0 L1175.1,363.4 C1196.3,374.6 1198.3,409.4 1178.4,421.3 L827.1,632.0 C801.3,647.5 748.4,650.3 721.1,637.7 Z" transform="translate(0 22)" fill="url(#grayside2)"/>
<path d="M519.2,544.5 C496.8,534.1 495.2,505.8 516.5,493.1 L875.9,277.5 C888.7,269.8 993.2,267.0 1006.5,274.0 L1175.1,363.4 C1196.3,374.6 1198.3,409.4 1178.4,421.3 L827.1,632.0 C801.3,647.5 748.4,650.3 721.1,637.7 Z" transform="translate(0 24)" fill="url(#grayside2)"/>
<path d="M519.2,544.5 C496.8,534.1 495.2,505.8 516.5,493.1 L875.9,277.5 C888.7,269.8 993.2,267.0 1006.5,274.0 L1175.1,363.4 C1196.3,374.6 1198.3,409.4 1178.4,421.3 L827.1,632.0 C801.3,647.5 748.4,650.3 721.1,637.7 Z" transform="translate(0 1)" fill="url(#grayside)"/>
<path d="M519.2,544.5 C496.8,534.1 495.2,505.8 516.5,493.1 L875.9,277.5 C888.7,269.8 993.2,267.0 1006.5,274.0 L1175.1,363.4 C1196.3,374.6 1198.3,409.4 1178.4,421.3 L827.1,632.0 C801.3,647.5 748.4,650.3 721.1,637.7 Z" transform="translate(0 3)" fill="url(#grayside)"/>
<path d="M519.2,544.5 C496.8,534.1 495.2,505.8 516.5,493.1 L875.9,277.5 C888.7,269.8 993.2,267.0 1006.5,274.0 L1175.1,363.4 C1196.3,374.6 1198.3,409.4 1178.4,421.3 L827.1,632.0 C801.3,647.5 748.4,650.3 721.1,637.7 Z" transform="translate(0 5)" fill="url(#grayside)"/>
<path d="M519.2,544.5 C496.8,534.1 495.2,505.8 516.5,493.1 L875.9,277.5 C888.7,269.8 993.2,267.0 1006.5,274.0 L1175.1,363.4 C1196.3,374.6 1198.3,409.4 1178.4,421.3 L827.1,632.0 C801.3,647.5 748.4,650.3 721.1,637.7 Z" transform="translate(0 7)" fill="url(#grayside)"/>
<path d="M519.2,544.5 C496.8,534.1 495.2,505.8 516.5,493.1 L875.9,277.5 C888.7,269.8 993.2,267.0 1006.5,274.0 L1175.1,363.4 C1196.3,374.6 1198.3,409.4 1178.4,421.3 L827.1,632.0 C801.3,647.5 748.4,650.3 721.1,637.7 Z" transform="translate(0 9)" fill="url(#grayside)"/>
<path d="M519.2,544.5 C496.8,534.1 495.2,505.8 516.5,493.1 L875.9,277.5 C888.7,269.8 993.2,267.0 1006.5,274.0 L1175.1,363.4 C1196.3,374.6 1198.3,409.4 1178.4,421.3 L827.1,632.0 C801.3,647.5 748.4,650.3 721.1,637.7 Z" transform="translate(0 11)" fill="url(#grayside)"/>
<path d="M519.2,544.5 C496.8,534.1 495.2,505.8 516.5,493.1 L875.9,277.5 C888.7,269.8 993.2,267.0 1006.5,274.0 L1175.1,363.4 C1196.3,374.6 1198.3,409.4 1178.4,421.3 L827.1,632.0 C801.3,647.5 748.4,650.3 721.1,637.7 Z" fill="#3A3A3A"/>
</g>
<clipPath id="graySil"><path d="M519.2,544.5 C496.8,534.1 495.2,505.8 516.5,493.1 L875.9,277.5 C888.7,269.8 993.2,267.0 1006.5,274.0 L1175.1,363.4 C1196.3,374.6 1198.3,409.4 1178.4,421.3 L827.1,632.0 C801.3,647.5 748.4,650.3 721.1,637.7 Z" transform="translate(0 0)"/><path d="M519.2,544.5 C496.8,534.1 495.2,505.8 516.5,493.1 L875.9,277.5 C888.7,269.8 993.2,267.0 1006.5,274.0 L1175.1,363.4 C1196.3,374.6 1198.3,409.4 1178.4,421.3 L827.1,632.0 C801.3,647.5 748.4,650.3 721.1,637.7 Z" transform="translate(0 3)"/><path d="M519.2,544.5 C496.8,534.1 495.2,505.8 516.5,493.1 L875.9,277.5 C888.7,269.8 993.2,267.0 1006.5,274.0 L1175.1,363.4 C1196.3,374.6 1198.3,409.4 1178.4,421.3 L827.1,632.0 C801.3,647.5 748.4,650.3 721.1,637.7 Z" transform="translate(0 6)"/><path d="M519.2,544.5 C496.8,534.1 495.2,505.8 516.5,493.1 L875.9,277.5 C888.7,269.8 993.2,267.0 1006.5,274.0 L1175.1,363.4 C1196.3,374.6 1198.3,409.4 1178.4,421.3 L827.1,632.0 C801.3,647.5 748.4,650.3 721.1,637.7 Z" transform="translate(0 9)"/><path d="M519.2,544.5 C496.8,534.1 495.2,505.8 516.5,493.1 L875.9,277.5 C888.7,269.8 993.2,267.0 1006.5,274.0 L1175.1,363.4 C1196.3,374.6 1198.3,409.4 1178.4,421.3 L827.1,632.0 C801.3,647.5 748.4,650.3 721.1,637.7 Z" transform="translate(0 12)"/><path d="M519.2,544.5 C496.8,534.1 495.2,505.8 516.5,493.1 L875.9,277.5 C888.7,269.8 993.2,267.0 1006.5,274.0 L1175.1,363.4 C1196.3,374.6 1198.3,409.4 1178.4,421.3 L827.1,632.0 C801.3,647.5 748.4,650.3 721.1,637.7 Z" transform="translate(0 15)"/><path d="M519.2,544.5 C496.8,534.1 495.2,505.8 516.5,493.1 L875.9,277.5 C888.7,269.8 993.2,267.0 1006.5,274.0 L1175.1,363.4 C1196.3,374.6 1198.3,409.4 1178.4,421.3 L827.1,632.0 C801.3,647.5 748.4,650.3 721.1,637.7 Z" transform="translate(0 18)"/><path d="M519.2,544.5 C496.8,534.1 495.2,505.8 516.5,493.1 L875.9,277.5 C888.7,269.8 993.2,267.0 1006.5,274.0 L1175.1,363.4 C1196.3,374.6 1198.3,409.4 1178.4,421.3 L827.1,632.0 C801.3,647.5 748.4,650.3 721.1,637.7 Z" transform="translate(0 21)"/><path d="M519.2,544.5 C496.8,534.1 495.2,505.8 516.5,493.1 L875.9,277.5 C888.7,269.8 993.2,267.0 1006.5,274.0 L1175.1,363.4 C1196.3,374.6 1198.3,409.4 1178.4,421.3 L827.1,632.0 C801.3,647.5 748.4,650.3 721.1,637.7 Z" transform="translate(0 24)"/></clipPath>
<g clip-path="url(#graySil)">
<clipPath id="cpw0"><ellipse cx="537" cy="515" rx="26" ry="15"/></clipPath>
<path fill="url(#notchL)" clip-path="url(#cpw0)" d="M511,515 A26,15 0 0 1 563,515 L563,529 A26,15 0 0 0 511,529 Z"/>
<path d="M513,533 L513,539 A11,6 0 0 0 535,539 L535,533 Z" fill="#0A7A0A"/>
<ellipse cx="524" cy="533" rx="11" ry="6" fill="#14A814" stroke="#30D030" stroke-width="0.8"/>
<clipPath id="cpw1"><ellipse cx="775" cy="624" rx="30" ry="12"/></clipPath>
<path fill="url(#notchG)" clip-path="url(#cpw1)" d="M745,624 A30,12 0 0 1 805,624 L805,646 A30,12 0 0 0 745,646 Z"/>
<path d="M761,652 L761,658 A11,6 0 0 0 783,658 L783,652 Z" fill="#0A7A0A"/>
<ellipse cx="772" cy="652" rx="11" ry="6" fill="#14A814" stroke="#30D030" stroke-width="0.8"/>
<clipPath id="cpw2"><ellipse cx="1172" cy="384" rx="22" ry="14"/></clipPath>
<path fill="url(#notchR)" clip-path="url(#cpw2)" d="M1150,384 A22,14 0 0 1 1194,384 L1194,398 A22,14 0 0 0 1150,398 Z"/>
<path d="M1173,402 L1173,408 A11,6 0 0 0 1195,408 L1195,402 Z" fill="#0A7A0A"/>
<ellipse cx="1184" cy="402" rx="11" ry="6" fill="#14A814" stroke="#30D030" stroke-width="0.8"/>
</g>
<ellipse cx="619.6" cy="459" rx="21" ry="11.5" fill="url(#grayHole)"/>
<ellipse cx="622.6" cy="461" rx="18" ry="9" fill="none" stroke="#808080" stroke-width="0.6" opacity="0.6"/>
<ellipse cx="842.5" cy="327" rx="21" ry="11.5" fill="url(#grayHole)"/>
<ellipse cx="845.5" cy="329" rx="18" ry="9" fill="none" stroke="#808080" stroke-width="0.6" opacity="0.6"/>
<ellipse cx="1060" cy="331" rx="21" ry="11.5" fill="url(#grayHole)"/>
<ellipse cx="1063" cy="333" rx="18" ry="9" fill="none" stroke="#808080" stroke-width="0.6" opacity="0.6"/>
<ellipse cx="1093.3" cy="444.4" rx="21" ry="11.5" fill="url(#grayHole)"/>
<ellipse cx="1096.3" cy="446.4" rx="18" ry="9" fill="none" stroke="#808080" stroke-width="0.6" opacity="0.6"/>
<ellipse cx="871" cy="575.6" rx="21" ry="11.5" fill="url(#grayHole)"/>
<ellipse cx="874" cy="577.6" rx="18" ry="9" fill="none" stroke="#808080" stroke-width="0.6" opacity="0.6"/>
<ellipse cx="655.4" cy="572.7" rx="21" ry="11.5" fill="url(#grayHole)"/>
<ellipse cx="658.4" cy="574.7" rx="18" ry="9" fill="none" stroke="#808080" stroke-width="0.6" opacity="0.6"/>
<text x="0" y="0" transform="translate(1157,158) rotate(-29.7) skewX(-15)" font-family="Liberation Sans" font-size="16" fill="#2A9AA8" letter-spacing="2.8" opacity="0.9">320-4-50187 FX 4AXIS</text>
<ellipse cx="326" cy="577.5" rx="24" ry="12" fill="none" stroke="#20B020" stroke-width="1"/>
<path d="M302,577.5 A24,12 0 0 1 350,577.5" fill="none" stroke="#4030D0" stroke-width="1"/>
<ellipse cx="324.2" cy="609.4" rx="24" ry="12" fill="none" stroke="#20B020" stroke-width="1"/>
<path d="M300.2,609.4 A24,12 0 0 1 348.2,609.4" fill="none" stroke="#4030D0" stroke-width="1"/>
<path d="M338,589 L374,568 M336,621 L376,598" stroke="#20B020" stroke-width="1"/>
</svg>
<div class="a" style="left:1513px;top:79px;width:50px;height:336px;background:linear-gradient(90deg,#6A7ED8,#7A8FE0 50%,#6A7ED8);border-radius:3px 3px 0 0"></div>
<div class="a" style="left:1514px;top:80px;width:48px;height:20px;background:linear-gradient(#8BA3EA,#6F89DD 40%,#7C95E2)"></div>
<div class="a" style="left:1545px;top:84px;width:13px;height:13px;background:#C47080;border:1px solid #E0C0D0;border-radius:2px"><svg class="a" style="left:1px;top:1px" width="9" height="9"><path d="M1.5,1.5 L7.5,7.5 M7.5,1.5 L1.5,7.5" stroke="#fff" stroke-width="2"/></svg></div>
<div class="a" style="left:1516px;top:100px;width:44px;height:312px;background:#ECE9D8"></div>
<div class="a" style="left:1518px;top:102px;width:20px;height:19px;border-top:1px solid #fff;border-left:1px solid #fff;border-right:1px solid #000;border-bottom:1px solid #000;box-shadow:inset -1px -1px 0 #ACA899"></div>
<svg class="a" style="left:1518px;top:102px" width="20" height="19" viewBox="0 0 20 19"><path d="M6,3 L6,15 L9,12 L11,16 L13,15 L11,11 L15,11 Z" fill="#000"/></svg>
<div class="a" style="left:1518px;top:126px;width:20px;height:19px;border-top:1px solid #fff;border-left:1px solid #fff;border-right:1px solid #000;border-bottom:1px solid #000;box-shadow:inset -1px -1px 0 #ACA899"></div>
<svg class="a" style="left:1518px;top:126px" width="20" height="19" viewBox="0 0 20 19"><path d="M3,7 L6,5 L8,5 L8,13 L3,13Z" fill="#fff" stroke="#000"/><rect x="10" y="3" width="4" height="7" fill="#fff" stroke="#000"/><path d="M12,11 L12,16" stroke="#cc0" stroke-width="2" stroke-dasharray="1 1"/></svg>
<div class="a" style="left:1538px;top:126px;width:20px;height:19px;border-top:1px solid #fff;border-left:1px solid #fff;border-right:1px solid #000;border-bottom:1px solid #000;box-shadow:inset -1px -1px 0 #ACA899"></div>
<svg class="a" style="left:1538px;top:126px" width="20" height="19" viewBox="0 0 20 19"><path d="M2,13 L7,7 L18,7 L13,13 Z" fill="#fff" stroke="#000"/></svg>
<div class="a" style="left:1518px;top:146px;width:20px;height:19px;border-top:1px solid #fff;border-left:1px solid #fff;border-right:1px solid #000;border-bottom:1px solid #000;box-shadow:inset -1px -1px 0 #ACA899"></div>
<svg class="a" style="left:1518px;top:146px" width="20" height="19" viewBox="0 0 20 19"><rect x="8" y="3" width="4" height="7" fill="#fff" stroke="#000"/><path d="M10,11 L10,16" stroke="#cc0" stroke-width="2" stroke-dasharray="1 1"/></svg>
<div class="a" style="left:1538px;top:146px;width:20px;height:19px;border-top:1px solid #fff;border-left:1px solid #fff;border-right:1px solid #000;border-bottom:1px solid #000;box-shadow:inset -1px -1px 0 #ACA899"></div>
<svg class="a" style="left:1538px;top:146px" width="20" height="19" viewBox="0 0 20 19"><path d="M3,12 L9,5 L16,11" stroke="#0c0" stroke-width="1.5" fill="none"/><rect x="2" y="11" width="3" height="3"/><rect x="8" y="4" width="3" height="3"/><rect x="15" y="10" width="3" height="3"/></svg>
<div class="a" style="left:1518px;top:166px;width:20px;height:19px;border-top:1px solid #000;border-left:1px solid #000;border-right:1px solid #fff;border-bottom:1px solid #fff;box-shadow:inset 1px 1px 0 #ACA899"></div>
<svg class="a" style="left:1518px;top:166px" width="20" height="19" viewBox="0 0 20 19"><circle cx="7" cy="9" r="4" fill="#0cf"/><path d="M11,6 L14,4 L17,8 L14,11Z" fill="#fff" stroke="#000"/><path d="M9,10 L9,17 M7,15 L9,17 L11,15" stroke="#e00" stroke-width="1.5" fill="none"/></svg>
<div class="a" style="left:1538px;top:166px;width:20px;height:19px;border-top:1px solid #000;border-left:1px solid #000;border-right:1px solid #fff;border-bottom:1px solid #fff;box-shadow:inset 1px 1px 0 #ACA899"></div>
<svg class="a" style="left:1538px;top:166px" width="20" height="19" viewBox="0 0 20 19"><circle cx="7" cy="9" r="4" fill="#0cf"/><path d="M11,6 L14,4 L17,8 L14,11Z" fill="#fff" stroke="#000"/></svg>
<div class="a" style="left:1518px;top:192px;width:20px;height:19px;border-top:1px solid #fff;border-left:1px solid #fff;border-right:1px solid #000;border-bottom:1px solid #000;box-shadow:inset -1px -1px 0 #ACA899"></div>
<svg class="a" style="left:1518px;top:192px" width="20" height="19" viewBox="0 0 20 19"><path d="M4,6 L10,6 M7,3 L7,9 M10,11 L16,11 M13,8 L13,14" stroke="#00e" stroke-width="2"/></svg>
<div class="a" style="left:1538px;top:192px;width:20px;height:19px;border-top:1px solid #fff;border-left:1px solid #fff;border-right:1px solid #000;border-bottom:1px solid #000;box-shadow:inset -1px -1px 0 #ACA899"></div>
<svg class="a" style="left:1538px;top:192px" width="20" height="19" viewBox="0 0 20 19"><path d="M4,7 L10,7 M10,12 L16,12" stroke="#888" stroke-width="2"/></svg>
<div class="a" style="left:1518px;top:212px;width:20px;height:19px;border-top:1px solid #fff;border-left:1px solid #fff;border-right:1px solid #000;border-bottom:1px solid #000;box-shadow:inset -1px -1px 0 #ACA899"></div>
<svg class="a" style="left:1518px;top:212px" width="20" height="19" viewBox="0 0 20 19"><rect x="3" y="4" width="6" height="5" fill="none" stroke="#888" stroke-dasharray="1 1"/><path d="M15,9 L15,4 L10,4 M12,2 L10,4 L12,6" stroke="#006" stroke-width="1.8" fill="none"/><path d="M5,10 L5,15 L10,15 M8,13 L10,15 L8,17" stroke="#900" stroke-width="1.8" fill="none"/></svg>
<div class="a" style="left:1518px;top:237px;width:20px;height:19px;border-top:1px solid #fff;border-left:1px solid #fff;border-right:1px solid #000;border-bottom:1px solid #000;box-shadow:inset -1px -1px 0 #ACA899"></div>
<svg class="a" style="left:1518px;top:237px" width="20" height="19" viewBox="0 0 20 19"><path d="M4,4 L16,4 L11,9 L9,9Z" fill="#888"/><path d="M10,11 L10,17 M7,14 L13,14" stroke="#888" stroke-width="2"/></svg>
<div class="a" style="left:1538px;top:237px;width:20px;height:19px;border-top:1px solid #fff;border-left:1px solid #fff;border-right:1px solid #000;border-bottom:1px solid #000;box-shadow:inset -1px -1px 0 #ACA899"></div>
<svg class="a" style="left:1538px;top:237px" width="20" height="19" viewBox="0 0 20 19"><path d="M4,4 L16,4 L11,9 L9,9Z" fill="#888"/><path d="M7,14 L13,14" stroke="#888" stroke-width="2"/></svg>
<div class="a" style="left:1518px;top:257px;width:20px;height:19px;border-top:1px solid #fff;border-left:1px solid #fff;border-right:1px solid #000;border-bottom:1px solid #000;box-shadow:inset -1px -1px 0 #ACA899"></div>
<svg class="a" style="left:1518px;top:257px" width="20" height="19" viewBox="0 0 20 19"><path d="M3,5 L17,5 L11,10 L9,10Z" fill="#fff" stroke="#000"/><path d="M8,14 L10,16 L15,11" stroke="#888" stroke-width="1.5" fill="none"/></svg>
<div class="a" style="left:1538px;top:257px;width:20px;height:19px;border-top:1px solid #fff;border-left:1px solid #fff;border-right:1px solid #000;border-bottom:1px solid #000;box-shadow:inset -1px -1px 0 #ACA899"></div>
<svg class="a" style="left:1538px;top:257px" width="20" height="19" viewBox="0 0 20 19"><path d="M3,8 L17,8 L11,12 L9,12Z" fill="#fff" stroke="#000"/><rect x="7" y="3" width="3" height="3" fill="#00f"/><rect x="11" y="4" width="3" height="3" fill="#e00"/><rect x="9" y="14" width="3" height="3" fill="#00f"/></svg>
<div class="a" style="left:1518px;top:282px;width:20px;height:19px;border-top:1px solid #fff;border-left:1px solid #fff;border-right:1px solid #000;border-bottom:1px solid #000;box-shadow:inset -1px -1px 0 #ACA899"></div>
<svg class="a" style="left:1518px;top:282px" width="20" height="19" viewBox="0 0 20 19"><rect x="3" y="4" width="14" height="7" rx="3" fill="#888"/><path d="M10,12 L10,17 M7,14.5 L13,14.5" stroke="#888" stroke-width="2"/></svg>
<div class="a" style="left:1538px;top:282px;width:20px;height:19px;border-top:1px solid #fff;border-left:1px solid #fff;border-right:1px solid #000;border-bottom:1px solid #000;box-shadow:inset -1px -1px 0 #ACA899"></div>
<svg class="a" style="left:1538px;top:282px" width="20" height="19" viewBox="0 0 20 19"><rect x="3" y="4" width="14" height="7" rx="3" fill="#888"/><path d="M7,14.5 L13,14.5" stroke="#888" stroke-width="2"/></svg>
<div class="a" style="left:1518px;top:302px;width:20px;height:19px;border-top:1px solid #fff;border-left:1px solid #fff;border-right:1px solid #000;border-bottom:1px solid #000;box-shadow:inset -1px -1px 0 #ACA899"></div>
<svg class="a" style="left:1518px;top:302px" width="20" height="19" viewBox="0 0 20 19"><rect x="3" y="4" width="14" height="11" fill="none" stroke="#888" stroke-dasharray="2 1"/><ellipse cx="10" cy="9.5" rx="4" ry="2.5" fill="#888"/></svg>
<div class="a" style="left:1518px;top:327px;width:20px;height:19px;border-top:1px solid #fff;border-left:1px solid #fff;border-right:1px solid #000;border-bottom:1px solid #000;box-shadow:inset -1px -1px 0 #ACA899"></div>
<svg class="a" style="left:1518px;top:327px" width="20" height="19" viewBox="0 0 20 19"><path d="M4,6 L8,6 M6,4 L6,8 M4,12 L8,12" stroke="#888" stroke-width="1.5"/><path d="M9,10 L12,6 L16,8 L14,12Z" fill="#eee" stroke="#888"/></svg>
<div class="a" style="left:1538px;top:327px;width:20px;height:19px;border-top:1px solid #fff;border-left:1px solid #fff;border-right:1px solid #000;border-bottom:1px solid #000;box-shadow:inset -1px -1px 0 #ACA899"></div>
<svg class="a" style="left:1538px;top:327px" width="20" height="19" viewBox="0 0 20 19"><path d="M4,6 L8,6 M6,4 L6,8 M4,12 L8,12" stroke="#888" stroke-width="1.5"/><path d="M9,10 L12,6 L16,8 L14,12Z" fill="#eee" stroke="#888"/></svg>
<div class="a" style="left:1518px;top:347px;width:20px;height:19px;border-top:1px solid #000;border-left:1px solid #000;border-right:1px solid #fff;border-bottom:1px solid #fff;box-shadow:inset 1px 1px 0 #ACA899"></div>
<svg class="a" style="left:1518px;top:347px" width="20" height="19" viewBox="0 0 20 19"><path d="M4,6 L10,3 L16,6 L16,14 L10,17 L4,14Z" fill="#4cf" stroke="#000"/><path d="M4,14 L16,8" stroke="#e00" stroke-width="1.5"/></svg>
<div class="a" style="left:1538px;top:347px;width:20px;height:19px;border-top:1px solid #fff;border-left:1px solid #fff;border-right:1px solid #000;border-bottom:1px solid #000;box-shadow:inset -1px -1px 0 #ACA899"></div>
<svg class="a" style="left:1538px;top:347px" width="20" height="19" viewBox="0 0 20 19"><path d="M4,6 L8,6 M6,4 L6,8 M10,6 L14,6 M12,4 L12,8" stroke="#888" stroke-width="1.5"/><path d="M9,10 L12,8 L16,10 L14,14Z" fill="#eee" stroke="#888"/></svg>
<div class="a" style="left:1518px;top:372px;width:20px;height:19px;border-top:1px solid #fff;border-left:1px solid #fff;border-right:1px solid #000;border-bottom:1px solid #000;box-shadow:inset -1px -1px 0 #ACA899"></div>
<svg class="a" style="left:1518px;top:372px" width="20" height="19" viewBox="0 0 20 19"><rect x="3" y="3" width="14" height="13" fill="none" stroke="#888" stroke-dasharray="2 1"/><circle cx="7" cy="12" r="2" fill="#666"/><circle cx="13" cy="12" r="2" fill="#666"/></svg>
<div class="a" style="left:1538px;top:372px;width:20px;height:19px;border-top:1px solid #fff;border-left:1px solid #fff;border-right:1px solid #000;border-bottom:1px solid #000;box-shadow:inset -1px -1px 0 #ACA899"></div>
<svg class="a" style="left:1538px;top:372px" width="20" height="19" viewBox="0 0 20 19"><circle cx="6" cy="12" r="2.5" fill="#8ee" stroke="#666"/><circle cx="13" cy="12" r="2.5" fill="#8ee" stroke="#666"/><path d="M3,8 L6,4 M17,8 L14,4" stroke="#888"/></svg>
<div class="a" style="left:1518px;top:392px;width:20px;height:19px;border-top:1px solid #fff;border-left:1px solid #fff;border-right:1px solid #000;border-bottom:1px solid #000;box-shadow:inset -1px -1px 0 #ACA899"></div>
<svg class="a" style="left:1518px;top:392px" width="20" height="19" viewBox="0 0 20 19"><rect x="3" y="3" width="8" height="8" fill="none" stroke="#000" stroke-dasharray="2 1"/><circle cx="9" cy="15" r="2" fill="#000"/><circle cx="14" cy="15" r="2" fill="#000"/></svg>
<div class="a" style="left:1538px;top:392px;width:20px;height:19px;border-top:1px solid #fff;border-left:1px solid #fff;border-right:1px solid #000;border-bottom:1px solid #000;box-shadow:inset -1px -1px 0 #ACA899"></div>
<svg class="a" style="left:1538px;top:392px" width="20" height="19" viewBox="0 0 20 19"><path d="M15,8 L15,4 L9,4" stroke="#006" stroke-width="1.8" fill="none"/><path d="M5,11 L5,15 L10,15" stroke="#900" stroke-width="1.8" fill="none"/><circle cx="8" cy="10" r="2.5" fill="#888"/><circle cx="13" cy="10" r="2.5" fill="#8ee" stroke="#666"/></svg>
<div class="a" style="left:1563px;top:78px;width:117px;height:338px;background:#000"></div>
<div class="a" style="left:1564px;top:79px;width:115px;height:112px;background:#ECE9D8;border-top:1px solid #fff;border-left:1px solid #fff;border-right:1px solid #ACA899;border-bottom:1px solid #ACA899"></div>
<div class="a" style="left:1564px;top:193px;width:115px;height:222px;background:#ECE9D8;border-top:1px solid #fff;border-left:1px solid #fff;border-right:1px solid #ACA899;border-bottom:1px solid #ACA899"></div>
<div class="a" style="left:1570px;top:84px;width:103px;height:19px;border-top:1px solid #000;border-left:2px solid #000;border-right:1px solid #fff;border-bottom:2px solid #fff;background:#ECE9D8"></div>
<div class="a" style="left:1570px;top:347px;width:103px;height:19px;border-top:1px solid #000;border-left:2px solid #000;border-right:1px solid #fff;border-bottom:2px solid #fff;background:#ECE9D8"></div>
<div class="t" style="left:1578px;top:88px;font-size:13px;font-weight:bold;color:#ACA899;text-shadow:1px 1px 0 #fff"><u>G</u>eometry</div>
<div class="t" style="left:1578px;top:108px;font-size:13px;font-weight:bold;color:#ACA899;text-shadow:1px 1px 0 #fff"><u>G</u>eo Edit</div>
<div class="t" style="left:1578px;top:129px;font-size:13px;font-weight:bold;color:#ACA899;text-shadow:1px 1px 0 #fff"><u>O</u>rder Path</div>
<div class="t" style="left:1578px;top:150px;font-size:13px;font-weight:bold;color:#ACA899;text-shadow:1px 1px 0 #fff"><u>T</u>ransform</div>
<div class="t" style="left:1578px;top:171px;font-size:13px;font-weight:bold;color:#ACA899;text-shadow:1px 1px 0 #fff"><u>C</u>urves</div>
<div class="t" style="left:1578px;top:202px;font-size:13px;font-weight:bold;color:#ACA899;text-shadow:1px 1px 0 #fff"><u>P</u>oint/Rapid</div>
<div class="t" style="left:1578px;top:223px;font-size:13px;font-weight:bold;color:#ACA899;text-shadow:1px 1px 0 #fff"><u>H</u>ole</div>
<div class="t" style="left:1578px;top:244px;font-size:13px;font-weight:bold;color:#ACA899;text-shadow:1px 1px 0 #fff"><u>G</u>roup Hole</div>
<div class="t" style="left:1578px;top:265px;font-size:13px;font-weight:bold;color:#ACA899;text-shadow:1px 1px 0 #fff"><u>L</u>ine</div>
<div class="t" style="left:1578px;top:286px;font-size:13px;font-weight:bold;color:#ACA899;text-shadow:1px 1px 0 #fff"><u>A</u>rc</div>
<div class="t" style="left:1578px;top:328px;font-size:13px;font-weight:bold;color:#ACA899;text-shadow:1px 1px 0 #fff"><u>W</u>all Offset</div>
<div class="t" style="left:1578px;top:349px;font-size:13px;font-weight:bold;color:#ACA899;text-shadow:1px 1px 0 #fff"><u>T</u>ext</div>
<div class="t" style="left:1578px;top:370px;font-size:13px;font-weight:bold;color:#ACA899;text-shadow:1px 1px 0 #fff"><u>S</u>ub Call</div>
<div class="t" style="left:1578px;top:391px;font-size:13px;font-weight:bold;color:#ACA899;text-shadow:1px 1px 0 #fff"><u>D</u>rill Call</div>
<div class="a" style="left:1563px;top:416px;width:117px;height:522px;background:#000"></div>
<div class="a" style="left:1564px;top:417px;width:115px;height:21px;background:#ECE9D8;border-top:1px solid #fff;border-left:1px solid #fff;border-right:1px solid #ACA899;border-bottom:1px solid #ACA899"></div>
<div class="t" style="left:1595px;top:421px;font-size:14px;color:#000">LAYERS</div>
<div class="a" style="left:1564px;top:438px;width:2px;height:500px;background:#ECE9D8"></div>
<div class="a" style="left:1564px;top:438px;width:1px;height:500px;background:#fff"></div>
<div class="a" style="left:1662px;top:440px;width:16px;height:497px;background:#D6D3CE"></div>
<div class="a" style="left:1662px;top:440px;width:16px;height:21px;background:#ECE9D8;border-top:1px solid #fff;border-left:1px solid #fff;border-right:1px solid #716F64;border-bottom:1px solid #716F64"><svg class="a" style="left:2px;top:3px" width="11" height="13"><path d="M5.5,1 L10,6 L7,6 L7,12 L4,12 L4,6 L1,6 Z" fill="#ACA899"/></svg></div>
<div class="a" style="left:1662px;top:916px;width:16px;height:21px;background:#ECE9D8;border-top:1px solid #fff;border-left:1px solid #fff;border-right:1px solid #716F64;border-bottom:1px solid #716F64"><svg class="a" style="left:2px;top:3px" width="11" height="13"><path d="M5.5,12 L10,7 L7,7 L7,1 L4,1 L4,7 L1,7 Z" fill="#ACA899"/></svg></div>
<div class="a" style="left:1679px;top:416px;width:1px;height:522px;background:#ECE9D8"></div>
<div class="t" style="left:1569px;top:440px;font-size:14px;font-weight:bold;color:#10AAF8;white-space:pre">H Layer    1</div>
<div class="t" style="left:1569px;top:456px;font-size:14px;font-weight:bold;color:#10C810;white-space:pre">H Layer    2</div>
<div class="t" style="left:1569px;top:472px;font-size:14px;font-weight:bold;color:#A8A8A8;white-space:pre">H Layer   31</div>
<div class="t" style="left:1569px;top:488px;font-size:14px;font-weight:bold;color:#585858;white-space:pre">H Layer   32</div>
<div class="t" style="left:1569px;top:504px;font-size:14px;font-weight:bold;color:#10AAF8;white-space:pre">H Layer   33</div>
<div class="t" style="left:1569px;top:520px;font-size:14px;font-weight:bold;color:#5020F0;white-space:pre">H Layer   36</div>
<div class="t" style="left:1569px;top:536px;font-size:14px;font-weight:bold;color:#C820D8;white-space:pre">H Layer   37</div>
<div class="t" style="left:1569px;top:552px;font-size:14px;font-weight:bold;color:#F8D000;white-space:pre">H Layer   38</div>
<div class="t" style="left:1569px;top:568px;font-size:14px;font-weight:bold;color:#988828;white-space:pre">H Layer   41</div>
<div class="t" style="left:1569px;top:584px;font-size:14px;font-weight:bold;color:#A86878;white-space:pre">H Layer   46</div>
<div class="t" style="left:1569px;top:600px;font-size:14px;font-weight:bold;color:#F01010;white-space:pre">H Layer   51</div>
<div class="t" style="left:1569px;top:616px;font-size:14px;font-weight:bold;color:#4828F0;white-space:pre">H Layer   52</div>
<div class="t" style="left:1569px;top:632px;font-size:14px;font-weight:bold;color:#585858;white-space:pre">H Layer   56</div>
<div class="t" style="left:1569px;top:648px;font-size:14px;font-weight:bold;color:#A08820;white-space:pre">H Layer   57</div>
<div class="t" style="left:1569px;top:664px;font-size:14px;font-weight:bold;color:#10AAF8;white-space:pre">H Layer   81</div>
<div class="t" style="left:1569px;top:680px;font-size:14px;font-weight:bold;color:#10C810;white-space:pre">H Layer   82</div>
<div class="t" style="left:1569px;top:696px;font-size:14px;font-weight:bold;color:#F01818;white-space:pre">H Layer   83</div>
<div class="t" style="left:1569px;top:712px;font-size:14px;font-weight:bold;color:#4828F0;white-space:pre">H Layer   84</div>
<div class="t" style="left:1569px;top:728px;font-size:14px;font-weight:bold;color:#389090;white-space:pre">  Layer   90</div>
<div class="t" style="left:1569px;top:744px;font-size:14px;font-weight:bold;color:#108810;white-space:pre">H Layer   92</div>
<div class="t" style="left:1569px;top:760px;font-size:14px;font-weight:bold;color:#800808;white-space:pre">H Layer   93</div>
<div class="t" style="left:1569px;top:776px;font-size:14px;font-weight:bold;color:#A86878;white-space:pre">H Layer   94</div>
<div class="t" style="left:1569px;top:792px;font-size:14px;font-weight:bold;color:#A8A8A8;white-space:pre">H Layer   95</div>
<div class="a" style="left:1567px;top:808px;width:94px;height:16px;background:#316AC5"></div>
<div class="t" style="left:1569px;top:808px;font-size:14px;font-weight:bold;color:#686868;white-space:pre">  Layer   96</div>
<div class="t" style="left:1569px;top:824px;font-size:14px;font-weight:bold;color:#10AAF8;white-space:pre">  Layer   97</div>
<div class="t" style="left:1569px;top:840px;font-size:14px;font-weight:bold;color:#10C810;white-space:pre">  Layer   98</div>
<div class="t" style="left:1569px;top:856px;font-size:14px;font-weight:bold;color:#F01010;white-space:pre">  Layer   99</div>
<div class="a" style="left:0;top:941px;width:1680px;height:1px;background:#fff"></div>
<div class="a" style="left:0;top:942px;width:1680px;height:23px;background:#ECE9D8"></div>
<div class="a" style="left:0;top:965px;width:1680px;height:2px;background:#ACA899"></div>
<div class="a" style="left:0;top:967px;width:1680px;height:2px;background:#000"></div>
<div class="a" style="left:0;top:969px;width:1680px;height:1px;background:#fff"></div>
<div class="a" style="left:0;top:970px;width:1680px;height:20px;background:#ECE9D8"></div>
<div class="a" style="left:0;top:988px;width:1680px;height:2px;background:#ACA899"></div>
<div class="a" style="left:0;top:941px;width:2px;height:49px;background:#fff"></div>
<div class="a" style="left:787px;top:945px;width:33px;height:19px;background:#F4F2EA;border-top:1px solid #000;border-left:1px solid #000;border-right:1px solid #fff;border-bottom:1px solid #fff"><svg class="a" style="left:3px;top:1px" width="28" height="16"><path d="M1,8 L16,8" stroke="#000" stroke-width="2"/><path d="M10,3 L16,8 L10,13Z" fill="#000"/><path d="M16,1 L26,1 L21,8 Z M16,15 L26,15 L21,8Z" fill="#00f"/></svg></div>
<div class="btn" style="left:822px;top:945px;width:37px;height:19px"><svg class="a" style="left:6px;top:2px" width="28" height="14"><path d="M4,11 L10,3" stroke="#0a0" stroke-width="1.5"/><rect x="2" y="10" width="3" height="3"/><rect x="9" y="2" width="3" height="3"/><path d="M20,4 L27,4 L23.5,9Z" fill="#000"/></svg></div>
<div class="sunk" style="left:861px;top:946px;width:71px;height:18px"></div>
<div class="t" style="left:866px;top:949px;font-size:14px;font-weight:bold">1582</div>
<div class="btn" style="left:957px;top:945px;width:25px;height:19px"><svg class="a" style="left:5px;top:2px" width="14" height="14"><rect x="2" y="4" width="10" height="2" fill="#000"/><rect x="2" y="8" width="10" height="2" fill="#000"/><path d="M1,13 L13,1" stroke="#e00" stroke-width="1.5"/></svg></div>
<div class="btn" style="left:1009px;top:945px;width:42px;height:19px"><svg class="a" style="left:1px;top:1px" width="40" height="17"><path d="M2,4 L7,8 L2,12Z" fill="#00f"/><path d="M8,11 L12,6 L16,4 L22,7 L26,4 L24,10 L8,11Z" fill="#0c0" stroke="#080"/><path d="M10,14 L24,14" stroke="#000" stroke-dasharray="1 2"/><path d="M30,4 L25,8 L30,12Z" fill="#00f"/><path d="M31,5 L38,5 L34.5,9Z" fill="#000"/></svg></div>
<div class="sunk" style="left:1052px;top:946px;width:72px;height:18px"></div>
<div class="t" style="left:1058px;top:949px;font-size:14px;font-weight:bold">90</div>
<div class="a" style="left:1571px;top:945px;width:47px;height:19px;background:#fff;border-top:1px solid #ACA899;border-right:1px solid #fff"></div>
<div class="t" style="left:1571px;top:948px;font-size:14px;font-weight:bold">LANE</div>
<div class="btn" style="left:1643px;top:944px;width:22px;height:20px"><svg class="a" style="left:2px;top:1px" width="17" height="16"><path d="M2,7 L8,7 L8,14 L2,14Z M2,7 L5,4 L11,4 L8,7 M11,4 L11,11 L8,14" fill="none" stroke="#888"/><path d="M9,2 L15,2 L15,8 M12,2 L15,5" stroke="#888" fill="none"/></svg></div>
<div class="a" style="left:1283px;top:970px;width:1px;height:18px;background:#ACA899"></div>
<div class="a" style="left:1286px;top:970px;width:124px;height:19px;border-top:1px solid #ACA899;border-left:1px solid #ACA899;border-right:1px solid #fff"></div>
<div class="t" style="left:1317px;top:973px;font-size:14px;font-weight:bold">0 / 1582</div>
<div class="a" style="left:1424px;top:970px;width:30px;height:20px;border-top:1px solid #fff;border-left:1px solid #fff;border-right:1px solid #000;border-bottom:1px solid #000"><svg class="a" style="left:10px;top:2px" width="14" height="16"><path d="M3,1 L3,13 L6,10 L8,15 L10,14 L8,9 L12,9 Z" fill="#000"/></svg></div>
<div class="a" style="left:1456px;top:970px;width:20px;height:20px;background:#F4F2EA;border-top:1px solid #000;border-left:1px solid #000;border-right:1px solid #fff"><svg class="a" style="left:4px;top:2px" width="12" height="16"><rect x="2" y="1" width="8" height="14" fill="none" stroke="#006" stroke-width="1.5"/><path d="M2,8 L10,8" stroke="#006" stroke-width="1.5"/></svg></div>
<div class="a" style="left:1494px;top:970px;width:20px;height:20px;border-top:1px solid #fff;border-left:1px solid #fff;border-right:1px solid #000;border-bottom:1px solid #000"><svg class="a" style="left:2px;top:2px" width="16" height="16"><path d="M1,3 L15,3 L9,8 L7,8Z" fill="#888"/><path d="M5,11 L8,14 L14,8" stroke="#888" stroke-width="1.5" fill="none"/></svg></div>
<div class="a" style="left:1515px;top:970px;width:20px;height:20px;border-top:1px solid #fff;border-left:1px solid #fff;border-right:1px solid #000;border-bottom:1px solid #000"><svg class="a" style="left:2px;top:2px" width="16" height="16"><path d="M1,5 L15,5 L9,10 L7,10Z" fill="#888"/><rect x="5" y="1" width="3" height="3" fill="#888"/><rect x="9" y="1" width="3" height="3" fill="#888"/><rect x="7" y="12" width="3" height="3" fill="#888"/></svg></div>
<div class="a" style="left:1552px;top:970px;width:20px;height:20px;border-top:1px solid #fff;border-left:1px solid #fff;border-right:1px solid #000;border-bottom:1px solid #000"><svg class="a" style="left:1px;top:1px" width="18" height="18"><path d="M8,3 L8,16 M3,9 L15,9" stroke="#000"/></svg></div>
<div class="a" style="left:1573px;top:970px;width:20px;height:20px;border-top:1px solid #fff;border-left:1px solid #fff;border-right:1px solid #000;border-bottom:1px solid #000"><svg class="a" style="left:1px;top:1px" width="18" height="18"><path d="M3,15 L15,3" stroke="#e00" stroke-width="1.5"/><circle cx="3.5" cy="14.5" r="2" fill="#e00"/><circle cx="14.5" cy="3.5" r="2" fill="#e00"/></svg></div>
<div class="a" style="left:1594px;top:970px;width:20px;height:20px;border-top:1px solid #fff;border-left:1px solid #fff;border-right:1px solid #000;border-bottom:1px solid #000"><svg class="a" style="left:1px;top:1px" width="18" height="18"><path d="M3,15 L15,3" stroke="#e00" stroke-width="1.5"/><circle cx="9" cy="9" r="2" fill="#e00"/></svg></div>
<div class="a" style="left:1615px;top:970px;width:20px;height:20px;border-top:1px solid #fff;border-left:1px solid #fff;border-right:1px solid #000;border-bottom:1px solid #000"><svg class="a" style="left:1px;top:1px" width="18" height="18"><circle cx="9" cy="9" r="6" fill="none" stroke="#000" stroke-width="1.2"/><circle cx="9" cy="9" r="2.2" fill="#e00"/></svg></div>
<div class="a" style="left:1636px;top:970px;width:20px;height:20px;border-top:1px solid #fff;border-left:1px solid #fff;border-right:1px solid #000;border-bottom:1px solid #000"><svg class="a" style="left:1px;top:1px" width="18" height="18"><path d="M3,3 L15,15 M15,3 L3,15" stroke="#e00" stroke-width="1.5"/><circle cx="9" cy="9" r="2" fill="#e00"/></svg></div>
<div class="a" style="left:1657px;top:970px;width:20px;height:20px;border-top:1px solid #fff;border-left:1px solid #fff;border-right:1px solid #000;border-bottom:1px solid #000"><svg class="a" style="left:1px;top:1px" width="18" height="18"><path d="M2,12 Q5,2 9,9 Q13,16 16,6" stroke="#000" stroke-width="1.3" fill="none"/><circle cx="4" cy="8" r="2" fill="#e00"/><circle cx="14" cy="10" r="2" fill="#e00"/></svg></div>
<div class="a" style="left:835px;top:850px;width:330px;height:91px;background:#ECE9D8;border-top:1px solid #fff;border-left:1px solid #fff"></div>
<svg class="a" style="left:845px;top:859px" width="36" height="30" viewBox="0 0 36 30">
<path d="M3,7 L9,7 L9,17 L3,17Z" fill="#ccc" stroke="#000" stroke-width="1.2"/><rect x="3.5" y="9" width="5" height="3" fill="#888"/>
<path d="M4,17 L8,17 L8,27 L4,27Z" fill="#dd0" stroke="#000"/><path d="M4,20 L8,22 L4,24 L8,26" stroke="#000" stroke-width="0.7" fill="none"/>
<path d="M10,24 L17,3 L22,3 L29,23" stroke="#0a0" stroke-width="2.2" fill="none"/><path d="M13,14 L25,14" stroke="#0a0" stroke-width="2"/><path d="M25,23 L29,27 L31,21Z" fill="#0a0"/></svg>
<div class="t" style="left:895px;top:858px;font-size:13px;font-weight:bold;color:#000">Text:</div>
<div class="sunk" style="left:930px;top:856px;width:240px;height:19px"></div>
<div class="t" style="left:935px;top:857px;font-size:14px;font-weight:normal;color:#000">X0 CENTERLINE</div>
<svg class="a" style="left:912px;top:880px" width="13" height="13"><circle cx="6.5" cy="6.5" r="5.5" fill="#fff" stroke="#ACA899"/><path d="M2.5,10.5 A5.5,5.5 0 0 1 10.5,2.5" fill="none" stroke="#000" stroke-width="1.2"/><circle cx="6.5" cy="6.5" r="2" fill="#000"/></svg>
<svg class="a" style="left:912px;top:901px" width="13" height="13"><circle cx="6.5" cy="6.5" r="5.5" fill="#fff" stroke="#ACA899"/><path d="M2.5,10.5 A5.5,5.5 0 0 1 10.5,2.5" fill="none" stroke="#000" stroke-width="1.2"/></svg>
<svg class="a" style="left:912px;top:922px" width="13" height="13"><circle cx="6.5" cy="6.5" r="5.5" fill="#fff" stroke="#ACA899"/><path d="M2.5,10.5 A5.5,5.5 0 0 1 10.5,2.5" fill="none" stroke="#000" stroke-width="1.2"/></svg>
<div class="t" style="left:930px;top:879px;font-size:13px;font-weight:bold;color:#000">Linear</div>
<div class="t" style="left:930px;top:900px;font-size:13px;font-weight:bold;color:#000">CW Circ</div>
<div class="t" style="left:930px;top:921px;font-size:13px;font-weight:bold;color:#000">CCW Circ</div>
<div class="t" style="left:1015px;top:879px;font-size:13px;font-weight:bold;color:#000">Start Position:</div>
<div class="t" style="left:1110px;top:879px;font-size:13px;font-weight:bold;color:#000">X</div>
<div class="t" style="left:1006px;top:900px;font-size:13px;font-weight:bold;color:#ACA899">Circular Center:</div>
<div class="t" style="left:1110px;top:900px;font-size:13px;font-weight:bold;color:#ACA899">X</div>
<div class="t" style="left:1011px;top:921px;font-size:13px;font-weight:bold;color:#000">Font File:</div>
<div class="sunk" style="left:1128px;top:877px;width:40px;height:19px"></div>
<div class="t" style="left:1132px;top:878px;font-size:14px;font-weight:normal;color:#000">12.0</div>
<div class="sunk" style="left:1128px;top:898px;width:40px;height:19px"></div>
<div class="sunk" style="left:1075px;top:919px;width:90px;height:19px"></div>
<div class="t" style="left:1080px;top:920px;font-size:14px;font-weight:normal;color:#000">afont.pm5</div>
<div class="a" style="left:1157px;top:827px;width:413px;height:139px;background:#0A48D8;border-radius:7px 7px 0 0"></div>
<div class="a" style="left:1158px;top:828px;width:411px;height:28px;border-radius:6px 6px 0 0;background:linear-gradient(#3A8CFF 0px,#0F62EE 3px,#0656E8 8px,#0A5CEA 20px,#0A50D8 28px)"></div>
<div class="t" style="left:1164px;top:837px;font-size:13px;font-weight:bold;color:#fff;text-shadow:1px 1px 0 #0A246A">Mask/Unmask</div>
<div class="a" style="left:1160px;top:856px;width:407px;height:107px;background:#ECE9D8"></div>
<svg class="a" style="left:1170px;top:861px" width="13" height="13"><circle cx="6.5" cy="6.5" r="5.5" fill="#fff" stroke="#ACA899"/><path d="M2.5,10.5 A5.5,5.5 0 0 1 10.5,2.5" fill="none" stroke="#000" stroke-width="1.2"/></svg>
<svg class="a" style="left:1170px;top:882px" width="13" height="13"><circle cx="6.5" cy="6.5" r="5.5" fill="#fff" stroke="#ACA899"/><path d="M2.5,10.5 A5.5,5.5 0 0 1 10.5,2.5" fill="none" stroke="#000" stroke-width="1.2"/></svg>
<svg class="a" style="left:1170px;top:903px" width="13" height="13"><circle cx="6.5" cy="6.5" r="5.5" fill="#fff" stroke="#ACA899"/><path d="M2.5,10.5 A5.5,5.5 0 0 1 10.5,2.5" fill="none" stroke="#000" stroke-width="1.2"/><circle cx="6.5" cy="6.5" r="2" fill="#000"/></svg>
<svg class="a" style="left:1170px;top:924px" width="13" height="13"><circle cx="6.5" cy="6.5" r="5.5" fill="#fff" stroke="#ACA899"/><path d="M2.5,10.5 A5.5,5.5 0 0 1 10.5,2.5" fill="none" stroke="#000" stroke-width="1.2"/></svg>
<div class="t" style="left:1188px;top:861px;font-size:13px;font-weight:bold;color:#000">Step</div>
<div class="t" style="left:1188px;top:882px;font-size:13px;font-weight:bold;color:#000">Tool</div>
<div class="t" style="left:1188px;top:903px;font-size:13px;font-weight:bold;color:#000">Layer</div>
<div class="t" style="left:1188px;top:924px;font-size:13px;font-weight:bold;color:#000">Plane</div>
<div class="t" style="left:1234px;top:861px;font-size:13px;font-weight:bold;color:#0000E0">Layer:</div>
<div class="sunk" style="left:1279px;top:858px;width:97px;height:18px"></div>
<div class="t" style="left:1403px;top:861px;font-size:13px;font-weight:normal;color:#000">Mask Z</div>
<div class="btn" style="left:1485px;top:857px;width:52px;height:20px"></div>
<div class="t" style="left:1494px;top:861px;font-size:13px;font-weight:bold;color:#000">Clear</div>
<svg class="a" style="left:1269px;top:882px" width="13" height="13"><circle cx="6.5" cy="6.5" r="5.5" fill="#fff" stroke="#ACA899"/><path d="M2.5,10.5 A5.5,5.5 0 0 1 10.5,2.5" fill="none" stroke="#000" stroke-width="1.2"/><circle cx="6.5" cy="6.5" r="2" fill="#000"/></svg>
<svg class="a" style="left:1269px;top:903px" width="13" height="13"><circle cx="6.5" cy="6.5" r="5.5" fill="#fff" stroke="#ACA899"/><path d="M2.5,10.5 A5.5,5.5 0 0 1 10.5,2.5" fill="none" stroke="#000" stroke-width="1.2"/></svg>
<div class="t" style="left:1287px;top:882px;font-size:13px;font-weight:bold;color:#000">Mask</div>
<div class="t" style="left:1287px;top:903px;font-size:13px;font-weight:bold;color:#000">Unmask</div>
<div class="btn" style="left:1278px;top:920px;width:34px;height:20px"></div>
<div class="t" style="left:1286px;top:924px;font-size:13px;font-weight:bold;color:#000">All</div>
<div class="t" style="left:1410px;top:882px;font-size:13px;font-weight:bold;color:#000">Above:</div>
<div class="t" style="left:1411px;top:903px;font-size:13px;font-weight:bold;color:#000">Below:</div>
<div class="sunk" style="left:1459px;top:879px;width:97px;height:18px"></div>
<div class="sunk" style="left:1459px;top:900px;width:97px;height:18px"></div>
<div class="btn" style="left:1503px;top:941px;width:52px;height:20px"></div>
<div class="t" style="left:1510px;top:945px;font-size:13px;font-weight:bold;color:#000">Close</div>
</body></html>
